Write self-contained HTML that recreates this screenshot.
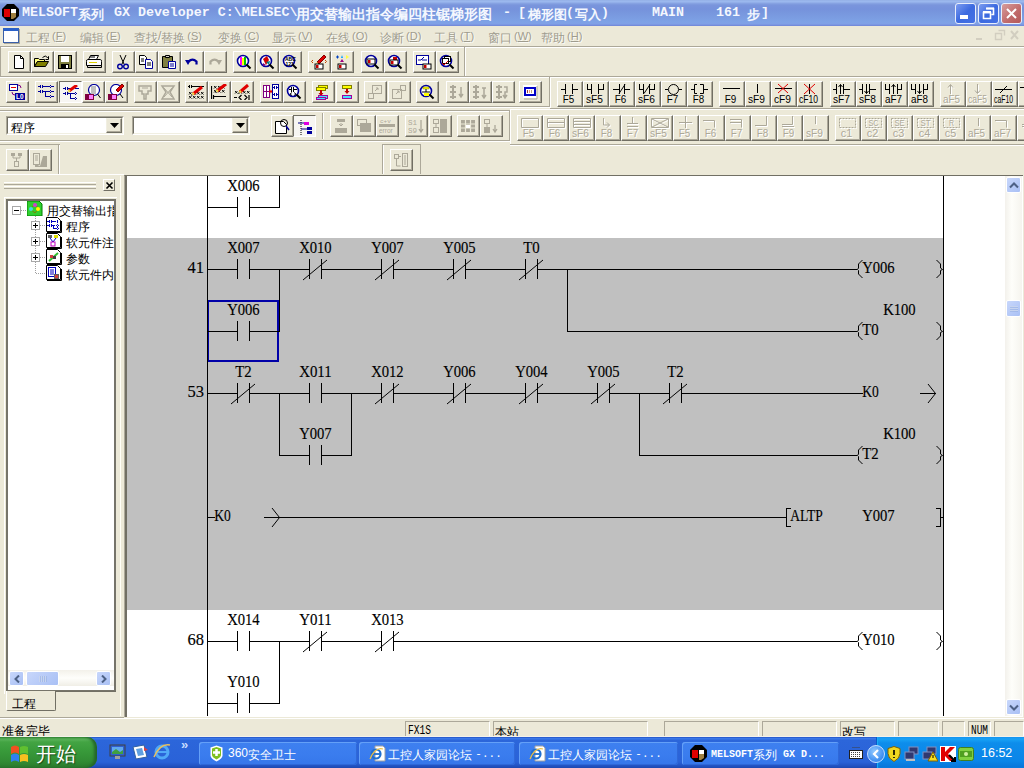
<!DOCTYPE html><html><head><meta charset="utf-8"><style>
@font-face{font-family:"Liberation Sans T";src:local("Liberation Sans");font-weight:400;size-adjust:133.33%}
@font-face{font-family:"Liberation Sans T";src:local("Liberation Sans Bold");font-weight:700;size-adjust:133.33%}
*{box-sizing:border-box}
body{margin:0;width:1024px;height:768px;position:relative;overflow:hidden;background:#ECE9D8;font-family:"Liberation Sans",sans-serif;font-size:12px;color:#000}
.a{position:absolute}
</style></head><body>
<div class="a" style="left:0;top:0;width:1024px;height:26px;background:linear-gradient(#92AEE4 0px,#9BB8EE 1px,#9BB8EE 2px,#8AA6E4 3px,#7A95DC 5px,#7692DC 9px,#7897DE 13px,#7B9DE2 18px,#7EA2E6 22px,#80A0E6 24px,#7890DE 25px,#6E86D6 26px)"></div>
<svg class="a" style="left:2px;top:4px" width="17" height="17" viewBox="0 0 17 17"><path d="M5 0h7l5 5v7l-5 5H5l-5-5V5z" fill="#000"/><path d="M2 5h6v8H2z" fill="#E00000"/><path d="M9 5h5v4H9z" fill="#fff"/><path d="M9 9h5v4l-3 2H9z" fill="#A08040"/></svg>
<span style="position:absolute;top:5px;color:#F4F7FE;font-weight:bold;white-space:pre;line-height:16px;font-family:'Liberation Mono',monospace;font-size:13.3px;left:22px">MELSOFT</span>
<span style="position:absolute;top:5px;color:#F4F7FE;font-weight:bold;white-space:pre;line-height:16px;font-family:'Liberation Sans',sans-serif;font-size:13px;left:78px"><span style="font-family:'Liberation Sans T';font-size:12.5px;line-height:0;font-style:normal;vertical-align:-2px;">系列</span></span>
<span style="position:absolute;top:5px;color:#F4F7FE;font-weight:bold;white-space:pre;line-height:16px;font-family:'Liberation Mono',monospace;font-size:13.3px;left:106px"> GX Developer C:\MELSEC\</span>
<span style="position:absolute;top:5px;color:#F4F7FE;font-weight:bold;white-space:pre;line-height:16px;font-family:'Liberation Sans',sans-serif;font-size:13px;left:296px"><span style="font-family:'Liberation Sans T';font-size:14.14px;line-height:0;font-style:normal;vertical-align:-2px;">用交替输出指令编四柱锯梯形图</span></span>
<span style="position:absolute;top:5px;color:#F4F7FE;font-weight:bold;white-space:pre;line-height:16px;font-family:'Liberation Mono',monospace;font-size:13.3px;left:503px">-</span>
<span style="position:absolute;top:5px;color:#F4F7FE;font-weight:bold;white-space:pre;line-height:16px;font-family:'Liberation Mono',monospace;font-size:13.3px;left:518px">[</span>
<span style="position:absolute;top:5px;color:#F4F7FE;font-weight:bold;white-space:pre;line-height:16px;font-family:'Liberation Sans',sans-serif;font-size:13px;left:528px"><span style="font-family:'Liberation Sans T';font-size:12.7px;line-height:0;font-style:normal;vertical-align:-2px;">梯形图</span></span>
<span style="position:absolute;top:5px;color:#F4F7FE;font-weight:bold;white-space:pre;line-height:16px;font-family:'Liberation Mono',monospace;font-size:13.3px;left:566px">(</span>
<span style="position:absolute;top:5px;color:#F4F7FE;font-weight:bold;white-space:pre;line-height:16px;font-family:'Liberation Sans',sans-serif;font-size:13px;left:575px"><span style="font-family:'Liberation Sans T';font-size:13px;line-height:0;font-style:normal;vertical-align:-2px;">写入</span></span>
<span style="position:absolute;top:5px;color:#F4F7FE;font-weight:bold;white-space:pre;line-height:16px;font-family:'Liberation Mono',monospace;font-size:13.3px;left:601px">)</span>
<span style="position:absolute;top:5px;color:#F4F7FE;font-weight:bold;white-space:pre;line-height:16px;font-family:'Liberation Mono',monospace;font-size:13.3px;left:652px">MAIN</span>
<span style="position:absolute;top:5px;color:#F4F7FE;font-weight:bold;white-space:pre;line-height:16px;font-family:'Liberation Mono',monospace;font-size:13.3px;left:716px">161</span>
<span style="position:absolute;top:5px;color:#F4F7FE;font-weight:bold;white-space:pre;line-height:16px;font-family:'Liberation Sans',sans-serif;font-size:13px;left:747px"><span style="font-family:'Liberation Sans T';font-size:13px;line-height:0;font-style:normal;vertical-align:-2px;">步</span></span>
<span style="position:absolute;top:5px;color:#F4F7FE;font-weight:bold;white-space:pre;line-height:16px;font-family:'Liberation Mono',monospace;font-size:13.3px;left:761px">]</span>
<div class="a" style="left:955px;top:3px;width:21px;height:21px;border:1px solid #E8EEFC;border-radius:3px;background:linear-gradient(135deg,#7C9CF0,#3C6AE0 50%,#4470E4)"><div class="a" style="left:4px;top:11px;width:8px;height:4px;background:#fff"></div></div>
<div class="a" style="left:978px;top:3px;width:21px;height:21px;border:1px solid #E8EEFC;border-radius:3px;background:linear-gradient(135deg,#7C9CF0,#3C6AE0 50%,#4470E4)"><svg class="a" style="left:3px;top:3px" width="13" height="13"><path d="M4.5 1.5h7v6h-2M1.5 5.5h7v6h-7z" fill="none" stroke="#fff" stroke-width="1.6"/><path d="M4 1.5h8M1 5.2h8" stroke="#fff" stroke-width="2.2"/></svg></div>
<div class="a" style="left:1001px;top:3px;width:21px;height:21px;border:1px solid #E8EEFC;border-radius:3px;background:linear-gradient(135deg,#D69C9C,#C06A6A 60%,#B45A5A)"><svg class="a" style="left:3px;top:3px" width="13" height="13"><path d="M2 2l9 9M11 2l-9 9" stroke="#fff" stroke-width="2"/></svg></div>
<div class="a" style="left:3px;top:28px;width:16px;height:15px;background:#fff;border:1px solid #3A5FA8;border-top:3px solid #2A60C8;box-shadow:1px 1px 0 #ACA899"></div>
<span class="a" style="left:26px;top:29px;font-size:12px;line-height:15px;color:#9F9C8E;white-space:pre;text-shadow:1px 1px 0 #FAFAF5"><span style="font-family:'Liberation Sans T';font-size:12px;line-height:0;font-style:normal;vertical-align:-2px;">工程</span><span style="font-size:11px;margin-left:2px">(<u>F</u>)</span></span>
<span class="a" style="left:80px;top:29px;font-size:12px;line-height:15px;color:#9F9C8E;white-space:pre;text-shadow:1px 1px 0 #FAFAF5"><span style="font-family:'Liberation Sans T';font-size:12px;line-height:0;font-style:normal;vertical-align:-2px;">编辑</span><span style="font-size:11px;margin-left:2px">(<u>E</u>)</span></span>
<span class="a" style="left:134px;top:29px;font-size:12px;line-height:15px;color:#9F9C8E;white-space:pre;text-shadow:1px 1px 0 #FAFAF5"><span style="font-family:'Liberation Sans T';font-size:12px;line-height:0;font-style:normal;vertical-align:-2px;">查找</span>/<span style="font-family:'Liberation Sans T';font-size:12px;line-height:0;font-style:normal;vertical-align:-2px;">替换</span><span style="font-size:11px;margin-left:2px">(<u>S</u>)</span></span>
<span class="a" style="left:218px;top:29px;font-size:12px;line-height:15px;color:#9F9C8E;white-space:pre;text-shadow:1px 1px 0 #FAFAF5"><span style="font-family:'Liberation Sans T';font-size:12px;line-height:0;font-style:normal;vertical-align:-2px;">变换</span><span style="font-size:11px;margin-left:2px">(<u>C</u>)</span></span>
<span class="a" style="left:272px;top:29px;font-size:12px;line-height:15px;color:#9F9C8E;white-space:pre;text-shadow:1px 1px 0 #FAFAF5"><span style="font-family:'Liberation Sans T';font-size:12px;line-height:0;font-style:normal;vertical-align:-2px;">显示</span><span style="font-size:11px;margin-left:2px">(<u>V</u>)</span></span>
<span class="a" style="left:326px;top:29px;font-size:12px;line-height:15px;color:#9F9C8E;white-space:pre;text-shadow:1px 1px 0 #FAFAF5"><span style="font-family:'Liberation Sans T';font-size:12px;line-height:0;font-style:normal;vertical-align:-2px;">在线</span><span style="font-size:11px;margin-left:2px">(<u>O</u>)</span></span>
<span class="a" style="left:380px;top:29px;font-size:12px;line-height:15px;color:#9F9C8E;white-space:pre;text-shadow:1px 1px 0 #FAFAF5"><span style="font-family:'Liberation Sans T';font-size:12px;line-height:0;font-style:normal;vertical-align:-2px;">诊断</span><span style="font-size:11px;margin-left:2px">(<u>D</u>)</span></span>
<span class="a" style="left:434px;top:29px;font-size:12px;line-height:15px;color:#9F9C8E;white-space:pre;text-shadow:1px 1px 0 #FAFAF5"><span style="font-family:'Liberation Sans T';font-size:12px;line-height:0;font-style:normal;vertical-align:-2px;">工具</span><span style="font-size:11px;margin-left:2px">(<u>T</u>)</span></span>
<span class="a" style="left:488px;top:29px;font-size:12px;line-height:15px;color:#9F9C8E;white-space:pre;text-shadow:1px 1px 0 #FAFAF5"><span style="font-family:'Liberation Sans T';font-size:12px;line-height:0;font-style:normal;vertical-align:-2px;">窗口</span><span style="font-size:11px;margin-left:2px">(<u>W</u>)</span></span>
<span class="a" style="left:541px;top:29px;font-size:12px;line-height:15px;color:#9F9C8E;white-space:pre;text-shadow:1px 1px 0 #FAFAF5"><span style="font-family:'Liberation Sans T';font-size:12px;line-height:0;font-style:normal;vertical-align:-2px;">帮助</span><span style="font-size:11px;margin-left:2px">(<u>H</u>)</span></span>
<svg class="a" style="left:970px;top:27px" width="52" height="18"><path d="M6 12h6" stroke="#D2CEC0" stroke-width="2"/><path d="M28.5 3.5h6v5M25.5 6.5h6v6h-6z" fill="none" stroke="#D2CEC0" stroke-width="1.4"/><path d="M41 4l7 8M48 4l-7 8" stroke="#D2CEC0" stroke-width="2"/></svg>
<div class="a" style="left:0px;top:46px;width:1024px;height:1px;background:#ACA899"></div>
<div class="a" style="left:0px;top:47px;width:1024px;height:1px;background:#fff"></div>
<div class="a" style="left:0px;top:47px;width:1px;height:29px;background:#ACA899"></div>
<div class="a" style="left:464px;top:47px;width:1px;height:29px;background:#ACA899"></div>
<div class="a" style="left:465px;top:47px;width:1px;height:29px;background:#fff"></div>
<div class="a" style="left:0px;top:76px;width:1024px;height:1px;background:#ACA899"></div>
<div class="a" style="left:0px;top:77px;width:1024px;height:1px;background:#fff"></div>
<div class="a" style="left:549px;top:77px;width:1px;height:30px;background:#ACA899"></div>
<div class="a" style="left:550px;top:77px;width:1px;height:32px;background:#fff"></div>
<div class="a" style="left:0px;top:106px;width:550px;height:1px;background:#ACA899"></div>
<div class="a" style="left:0px;top:107px;width:550px;height:1px;background:#fff"></div>
<div class="a" style="left:550px;top:108px;width:474px;height:1px;background:#ACA899"></div>
<div class="a" style="left:510px;top:109px;width:514px;height:1px;background:#fff"></div>
<div class="a" style="left:0px;top:110px;width:510px;height:1px;background:#ACA899"></div>
<div class="a" style="left:0px;top:111px;width:510px;height:1px;background:#fff"></div>
<div class="a" style="left:509px;top:110px;width:1px;height:31px;background:#ACA899"></div>
<div class="a" style="left:510px;top:109px;width:1px;height:36px;background:#fff"></div>
<div class="a" style="left:0px;top:140px;width:510px;height:1px;background:#ACA899"></div>
<div class="a" style="left:0px;top:141px;width:510px;height:1px;background:#fff"></div>
<div class="a" style="left:510px;top:144px;width:514px;height:1px;background:#ACA899"></div>
<div class="a" style="left:510px;top:145px;width:514px;height:1px;background:#fff"></div>
<div class="a" style="left:0px;top:144px;width:60px;height:1px;background:#ACA899"></div>
<div class="a" style="left:58px;top:145px;width:1px;height:29px;background:#ACA899"></div>
<div class="a" style="left:59px;top:145px;width:1px;height:29px;background:#fff"></div>
<div class="a" style="left:382px;top:144px;width:39px;height:1px;background:#ACA899"></div>
<div class="a" style="left:382px;top:145px;width:1px;height:29px;background:#ACA899"></div>
<div class="a" style="left:420px;top:145px;width:1px;height:29px;background:#ACA899"></div>
<div class="a" style="left:383px;top:145px;width:1px;height:29px;background:#fff"></div>
<div class="a" style="left:8px;top:51px;width:23px;height:22px;border-top:1px solid #fff;border-left:1px solid #fff;border-right:1px solid #716F64;border-bottom:1px solid #716F64;box-shadow:inset -1px -1px 0 #ACA899;background:#ECE9D8"><svg class="a" style="left:2px;top:2px" width="16" height="16" viewBox="0 0 16 16"><path d="M3.5 1.5h6l3 3v10h-9z" fill="#fff" stroke="#000"/><path d="M9.5 1.5v3h3" fill="none" stroke="#000"/></svg></div>
<div class="a" style="left:31px;top:51px;width:23px;height:22px;border-top:1px solid #fff;border-left:1px solid #fff;border-right:1px solid #716F64;border-bottom:1px solid #716F64;box-shadow:inset -1px -1px 0 #ACA899;background:#ECE9D8"><svg class="a" style="left:2px;top:2px" width="16" height="16" viewBox="0 0 16 16"><path d="M0.5 4.5h4l1 1h5v2h-7l-3 5z" fill="#FFFF80" stroke="#000"/><path d="M0.5 12.5l3-5h11l-3 5z" fill="#808000" stroke="#000"/><path d="M8.5 3.5q3-3 5 0l1-1v3h-3" fill="none" stroke="#000"/></svg></div>
<div class="a" style="left:54px;top:51px;width:23px;height:22px;border-top:1px solid #fff;border-left:1px solid #fff;border-right:1px solid #716F64;border-bottom:1px solid #716F64;box-shadow:inset -1px -1px 0 #ACA899;background:#ECE9D8"><svg class="a" style="left:2px;top:2px" width="16" height="16" viewBox="0 0 16 16"><rect x="1.5" y="1.5" width="13" height="13" fill="#808040" stroke="#000"/><rect x="4" y="2" width="8" height="6" fill="#fff"/><rect x="4" y="10" width="8" height="5" fill="#000"/><rect x="9" y="11" width="2" height="3" fill="#fff"/></svg></div>
<div class="a" style="left:83px;top:51px;width:23px;height:22px;border-top:1px solid #fff;border-left:1px solid #fff;border-right:1px solid #716F64;border-bottom:1px solid #716F64;box-shadow:inset -1px -1px 0 #ACA899;background:#ECE9D8"><svg class="a" style="left:2px;top:2px" width="16" height="16" viewBox="0 0 16 16"><path d="M4.5 1.5h8l-2 4h-8z" fill="#fff" stroke="#000"/><path d="M1.5 5.5h13q1 0 1 2v4h-15v-4q0-2 1-2z" fill="#fff" stroke="#000"/><path d="M1.5 11.5h14v2h-14z" fill="#D4D0C8" stroke="#000"/><path d="M3 8.5h8" stroke="#E0D000"/><path d="M4 3h5" stroke="#000"/></svg></div>
<div class="a" style="left:112px;top:51px;width:23px;height:22px;border-top:1px solid #fff;border-left:1px solid #fff;border-right:1px solid #716F64;border-bottom:1px solid #716F64;box-shadow:inset -1px -1px 0 #ACA899;background:#ECE9D8"><svg class="a" style="left:2px;top:2px" width="16" height="16" viewBox="0 0 16 16"><path d="M5 1l4 9M11 1l-4 9" stroke="#000"/><circle cx="5" cy="12.5" r="2.3" fill="none" stroke="#00009C" stroke-width="1.4"/><circle cx="11" cy="12.5" r="2.3" fill="none" stroke="#00009C" stroke-width="1.4"/></svg></div>
<div class="a" style="left:135px;top:51px;width:23px;height:22px;border-top:1px solid #fff;border-left:1px solid #fff;border-right:1px solid #716F64;border-bottom:1px solid #716F64;box-shadow:inset -1px -1px 0 #ACA899;background:#ECE9D8"><svg class="a" style="left:2px;top:2px" width="16" height="16" viewBox="0 0 16 16"><path d="M1.5 1.5h5l2 2v7h-7z" fill="#fff" stroke="#000"/><path d="M7.5 5.5h5l2 2v7h-7z" fill="#fff" stroke="#00009C"/><path d="M3 5h3M3 7h3M9 9h4M9 11h4" stroke="#000"/></svg></div>
<div class="a" style="left:158px;top:51px;width:23px;height:22px;border-top:1px solid #fff;border-left:1px solid #fff;border-right:1px solid #716F64;border-bottom:1px solid #716F64;box-shadow:inset -1px -1px 0 #ACA899;background:#ECE9D8"><svg class="a" style="left:2px;top:2px" width="16" height="16" viewBox="0 0 16 16"><path d="M1.5 2.5h10v11h-10z" fill="#808040" stroke="#000"/><path d="M4.5 1.5h4v2h-4z" fill="#D4D0C8" stroke="#000"/><path d="M7.5 7.5h7v7h-7z" fill="#fff" stroke="#00009C"/><path d="M9 10h4M9 12h4" stroke="#00009C"/></svg></div>
<div class="a" style="left:181px;top:51px;width:23px;height:22px;border-top:1px solid #fff;border-left:1px solid #fff;border-right:1px solid #716F64;border-bottom:1px solid #716F64;box-shadow:inset -1px -1px 0 #ACA899;background:#ECE9D8"><svg class="a" style="left:2px;top:2px" width="16" height="16" viewBox="0 0 16 16"><path d="M4.5 7.5q4-4 8 0v3" fill="none" stroke="#00009C" stroke-width="2.2"/><path d="M1 6l6 0-3 5z" fill="#00009C"/></svg></div>
<div class="a" style="left:204px;top:51px;width:23px;height:22px;border-top:1px solid #fff;border-left:1px solid #fff;border-right:1px solid #716F64;border-bottom:1px solid #716F64;box-shadow:inset -1px -1px 0 #ACA899;background:#ECE9D8"><svg class="a" style="left:2px;top:2px" width="16" height="16" viewBox="0 0 16 16"><path d="M11.5 7.5q-4-4-8 0v3" fill="none" stroke="#ACA899" stroke-width="2.2"/><path d="M15 6l-6 0 3 5z" fill="#ACA899"/></svg></div>
<div class="a" style="left:233px;top:51px;width:23px;height:22px;border-top:1px solid #fff;border-left:1px solid #fff;border-right:1px solid #716F64;border-bottom:1px solid #716F64;box-shadow:inset -1px -1px 0 #ACA899;background:#ECE9D8"><svg class="a" style="left:2px;top:2px" width="16" height="16" viewBox="0 0 16 16"><circle cx="7" cy="7" r="5.5" fill="#fff" stroke="#00009C" stroke-width="1.6"/><rect x="4" y="3" width="2" height="8" fill="#FF00FF"/><rect x="6" y="4" width="2" height="7" fill="#FFFF00"/><rect x="8" y="3" width="2" height="8" fill="#00C000"/><path d="M10.5 10.5l4 4" stroke="#000" stroke-width="2"/></svg></div>
<div class="a" style="left:256px;top:51px;width:23px;height:22px;border-top:1px solid #fff;border-left:1px solid #fff;border-right:1px solid #716F64;border-bottom:1px solid #716F64;box-shadow:inset -1px -1px 0 #ACA899;background:#ECE9D8"><svg class="a" style="left:2px;top:2px" width="16" height="16" viewBox="0 0 16 16"><circle cx="7" cy="7" r="5.5" fill="#fff" stroke="#00009C" stroke-width="1.6"/><path d="M4 5l4-3 2 4-3 5z" fill="#D00000"/><path d="M7 8l4-1-1 4z" fill="#008080"/><path d="M4 9l3 2-3 1z" fill="#800080"/><path d="M10.5 10.5l4 4" stroke="#000" stroke-width="2"/></svg></div>
<div class="a" style="left:279px;top:51px;width:23px;height:22px;border-top:1px solid #fff;border-left:1px solid #fff;border-right:1px solid #716F64;border-bottom:1px solid #716F64;box-shadow:inset -1px -1px 0 #ACA899;background:#ECE9D8"><svg class="a" style="left:2px;top:2px" width="16" height="16" viewBox="0 0 16 16"><circle cx="7" cy="7" r="5.5" fill="#fff" stroke="#00009C" stroke-width="1.6"/><text x="3" y="7" font-size="5" font-family="Liberation Sans" font-weight="bold">ABC</text><text x="3.5" y="11.5" font-size="5" font-family="Liberation Sans" font-weight="bold">123</text><path d="M10.5 10.5l4 4" stroke="#000" stroke-width="2"/></svg></div>
<div class="a" style="left:308px;top:51px;width:23px;height:22px;border-top:1px solid #fff;border-left:1px solid #fff;border-right:1px solid #716F64;border-bottom:1px solid #716F64;box-shadow:inset -1px -1px 0 #ACA899;background:#ECE9D8"><svg class="a" style="left:2px;top:2px" width="16" height="16" viewBox="0 0 16 16"><path d="M2 6l-1.5 1.5L2 9M14 6l1.5 1.5L14 9" stroke="#C04000" fill="none"/><path d="M6 8l7-7 2 2-7 7z" fill="#E00000" stroke="#800000"/><path d="M6 8l-1 2 2-1z" fill="#FFD040"/><rect x="4" y="10" width="8" height="5" fill="#fff" stroke="#000" stroke-width="1"/><rect x="5" y="11" width="2" height="3" fill="#C00000"/><rect x="7" y="11" width="1" height="3" fill="#F08080"/></svg></div>
<div class="a" style="left:331px;top:51px;width:23px;height:22px;border-top:1px solid #fff;border-left:1px solid #fff;border-right:1px solid #716F64;border-bottom:1px solid #716F64;box-shadow:inset -1px -1px 0 #ACA899;background:#ECE9D8"><svg class="a" style="left:2px;top:2px" width="16" height="16" viewBox="0 0 16 16"><path d="M2 3h3M3.5 1.5v3" stroke="#0040C0"/><path d="M8 1l1 3h-2z" fill="#00A0FF"/><path d="M12 1l3 2-3 2z" fill="#FFFF40"/><path d="M6 8l2-3 2 3z" fill="#A00080"/><rect x="4" y="10" width="8" height="5" fill="#fff" stroke="#000" stroke-width="1"/><rect x="5" y="11" width="2" height="3" fill="#C00000"/><rect x="7" y="11" width="1" height="3" fill="#F08080"/></svg></div>
<div class="a" style="left:361px;top:51px;width:23px;height:22px;border-top:1px solid #fff;border-left:1px solid #fff;border-right:1px solid #716F64;border-bottom:1px solid #716F64;box-shadow:inset -1px -1px 0 #ACA899;background:#ECE9D8"><svg class="a" style="left:2px;top:2px" width="16" height="16" viewBox="0 0 16 16"><circle cx="7" cy="7" r="5.5" fill="#fff" stroke="#00009C" stroke-width="1.6"/><rect x="3" y="5" width="8" height="5" fill="#fff" stroke="#000" stroke-width="1"/><rect x="4" y="6" width="2" height="3" fill="#C00000"/><rect x="6" y="6" width="1" height="3" fill="#F08080"/><path d="M10.5 10.5l4 4" stroke="#000" stroke-width="2"/></svg></div>
<div class="a" style="left:384px;top:51px;width:23px;height:22px;border-top:1px solid #fff;border-left:1px solid #fff;border-right:1px solid #716F64;border-bottom:1px solid #716F64;box-shadow:inset -1px -1px 0 #ACA899;background:#ECE9D8"><svg class="a" style="left:2px;top:2px" width="16" height="16" viewBox="0 0 16 16"><circle cx="7" cy="7" r="5.5" fill="#fff" stroke="#00009C" stroke-width="1.6"/><rect x="6" y="3" width="4" height="3" fill="#C00000"/><rect x="3" y="6" width="8" height="5" fill="#fff" stroke="#000" stroke-width="1"/><rect x="4" y="7" width="2" height="3" fill="#C00000"/><rect x="6" y="7" width="1" height="3" fill="#F08080"/><path d="M10.5 10.5l4 4" stroke="#000" stroke-width="2"/></svg></div>
<div class="a" style="left:413px;top:51px;width:23px;height:22px;border-top:1px solid #fff;border-left:1px solid #fff;border-right:1px solid #716F64;border-bottom:1px solid #716F64;box-shadow:inset -1px -1px 0 #ACA899;background:#ECE9D8"><svg class="a" style="left:2px;top:2px" width="16" height="16" viewBox="0 0 16 16"><rect x="0.5" y="1.5" width="12" height="9" fill="#fff" stroke="#00009C"/><path d="M2 6h3l3-3M6 6h5" stroke="#00009C" fill="none"/><rect x="7" y="10" width="8" height="5" fill="#fff" stroke="#000" stroke-width="1"/><rect x="8" y="11" width="2" height="3" fill="#C00000"/><rect x="10" y="11" width="1" height="3" fill="#F08080"/></svg></div>
<div class="a" style="left:436px;top:51px;width:23px;height:22px;border-top:1px solid #fff;border-left:1px solid #fff;border-right:1px solid #716F64;border-bottom:1px solid #716F64;box-shadow:inset -1px -1px 0 #ACA899;background:#ECE9D8"><svg class="a" style="left:2px;top:2px" width="16" height="16" viewBox="0 0 16 16"><circle cx="7" cy="7" r="5.5" fill="#fff" stroke="#00009C" stroke-width="1.6"/><rect x="5.5" y="2.5" width="6" height="5" fill="#fff" stroke="#000"/><rect x="3.5" y="4.5" width="6" height="5" fill="#fff" stroke="#000"/><path d="M3 9l2 2 4-4" stroke="#E00000" fill="none"/><path d="M10.5 10.5l4 4" stroke="#000" stroke-width="2"/></svg></div>
<div class="a" style="left:6px;top:81px;width:23px;height:22px;border-top:1px solid #fff;border-left:1px solid #fff;border-right:1px solid #716F64;border-bottom:1px solid #716F64;box-shadow:inset -1px -1px 0 #ACA899;background:#ECE9D8"><svg class="a" style="left:2px;top:2px" width="16" height="16" viewBox="0 0 16 16"><rect x="0.5" y="0.5" width="8" height="6" fill="#fff" stroke="#00009C"/><path d="M2 3.5h5" stroke="#E00000"/><path d="M9 1q3 0 3 3M3 8q0 3 3 3" stroke="#800080" fill="none"/><rect x="6" y="9" width="10" height="7" fill="#00009C"/><text x="7" y="15" font-size="6.5" fill="#fff" font-family="Liberation Sans" font-weight="bold">L0</text></svg></div>
<div class="a" style="left:35px;top:81px;width:23px;height:22px;border-top:1px solid #fff;border-left:1px solid #fff;border-right:1px solid #716F64;border-bottom:1px solid #716F64;box-shadow:inset -1px -1px 0 #ACA899;background:#ECE9D8"><svg class="a" style="left:2px;top:2px" width="16" height="16" viewBox="0 0 16 16"><path d="M0 2.5h2M2.5 1v3M4.5 1v3M5 2.5h6M14 2.5h2M0 7.5h2M2.5 6v3M4.5 6v3M5 7.5h6M14 7.5h2M7.5 8v5M8 12.5h3M14 12.5h2" stroke="#00009C" fill="none"/><path d="M11 2.5h3M11 7.5h3M11 12.5h3M12.5 1v3M12.5 6v3M12.5 11v3" stroke="#00009C" stroke-dasharray="1 1" fill="none"/></svg></div>
<div class="a" style="left:59px;top:81px;width:23px;height:22px;border-top:1px solid #716F64;border-left:1px solid #716F64;border-right:1px solid #fff;border-bottom:1px solid #fff;background:#F7F6F2"><svg class="a" style="left:3px;top:3px" width="16" height="16" viewBox="0 0 16 16"><path d="M0 3.5h2M2.5 2v3M4.5 2v3M5 3.5h3M12 3.5h4M0 8.5h2M2.5 7v3M4.5 7v3M5 8.5h6M7.5 9v5M8 13.5h3" stroke="#00009C" fill="none"/><path d="M11 8.5h4M11 13.5h4M12.5 7v3M12.5 12v3" stroke="#00009C" stroke-dasharray="1 1" fill="none"/><path d="M6 6L14 0" stroke="#E00000" stroke-width="3"/><path d="M5.5 6.5l1.5-1.5" stroke="#F0E040" stroke-width="2"/><path d="M4.5 7.5l0.5-0.5" stroke="#000" stroke-width="1.5"/></svg></div>
<div class="a" style="left:82px;top:81px;width:23px;height:22px;border-top:1px solid #fff;border-left:1px solid #fff;border-right:1px solid #716F64;border-bottom:1px solid #716F64;box-shadow:inset -1px -1px 0 #ACA899;background:#ECE9D8"><svg class="a" style="left:2px;top:2px" width="16" height="16" viewBox="0 0 16 16"><circle cx="9" cy="6" r="5.5" fill="#fff" stroke="#00009C" stroke-width="1.2"/><path d="M6 3h5M6 5h5M6 7h5M6 9h5" stroke="#808080"/><path d="M12.5 10l3 4" stroke="#000"/><rect x="0" y="10" width="9" height="6" fill="#800040"/><rect x="4" y="11" width="4" height="4" fill="#FF80FF"/></svg></div>
<div class="a" style="left:105px;top:81px;width:23px;height:22px;border-top:1px solid #fff;border-left:1px solid #fff;border-right:1px solid #716F64;border-bottom:1px solid #716F64;box-shadow:inset -1px -1px 0 #ACA899;background:#ECE9D8"><svg class="a" style="left:2px;top:2px" width="16" height="16" viewBox="0 0 16 16"><circle cx="8" cy="6" r="5.5" fill="#fff" stroke="#00009C" stroke-width="1.2"/><path d="M8 6l6-6 2 2-6 6z" fill="#E00000" stroke="#800000"/><path d="M12 10l3 4" stroke="#000"/><rect x="0" y="10" width="9" height="6" fill="#800040"/><rect x="4" y="11" width="4" height="4" fill="#FF80FF"/></svg></div>
<div class="a" style="left:134px;top:81px;width:23px;height:22px;border-top:1px solid #fff;border-left:1px solid #fff;border-right:1px solid #716F64;border-bottom:1px solid #716F64;box-shadow:inset -1px -1px 0 #ACA899;background:#ECE9D8"><svg class="a" style="left:2px;top:2px" width="16" height="16" viewBox="0 0 16 16"><path d="M2 2h12v5h-3v3h-2v5h-2v-5h-2v-3h-3z" fill="none" stroke="#ACA899" stroke-width="1.5"/><path d="M5 4h6" stroke="#ACA899"/></svg></div>
<div class="a" style="left:157px;top:81px;width:23px;height:22px;border-top:1px solid #fff;border-left:1px solid #fff;border-right:1px solid #716F64;border-bottom:1px solid #716F64;box-shadow:inset -1px -1px 0 #ACA899;background:#ECE9D8"><svg class="a" style="left:2px;top:2px" width="16" height="16" viewBox="0 0 16 16"><path d="M2 2h12l-4 6 4 7h-12l4-7z" fill="none" stroke="#ACA899" stroke-width="1.5"/><path d="M4 4l8 9M12 4l-8 9" stroke="#ACA899"/></svg></div>
<div class="a" style="left:185px;top:81px;width:23px;height:22px;border-top:1px solid #fff;border-left:1px solid #fff;border-right:1px solid #716F64;border-bottom:1px solid #716F64;box-shadow:inset -1px -1px 0 #ACA899;background:#ECE9D8"><svg class="a" style="left:2px;top:2px" width="16" height="16" viewBox="0 0 16 16"><path d="M0 2.5h2M1.5 1v3M3.5 1v3M4 2.5h12" stroke="#000" fill="none"/><path d="M1 8l2.5 2.5M3.5 8l-2.5 2.5M5 8l2.5 2.5M7.5 8l-2.5 2.5M9 8l2.5 2.5M11.5 8l-2.5 2.5M13 8l2.5 2.5M15.5 8l-2.5 2.5M1 12l2.5 2.5M3.5 12l-2.5 2.5M5 12l2.5 2.5M7.5 12l-2.5 2.5M9 12l2.5 2.5M11.5 12l-2.5 2.5M13 12l2.5 2.5M15.5 12l-2.5 2.5" stroke="#000" stroke-width="0.9" fill="none"/><path d="M5 10L14 3" stroke="#E00000" stroke-width="3"/><path d="M4.5 10.5l1.5-1.5" stroke="#F0E040" stroke-width="2"/><path d="M3.5 11.5l0.5-0.5" stroke="#000" stroke-width="1.5"/></svg></div>
<div class="a" style="left:208px;top:81px;width:23px;height:22px;border-top:1px solid #fff;border-left:1px solid #fff;border-right:1px solid #716F64;border-bottom:1px solid #716F64;box-shadow:inset -1px -1px 0 #ACA899;background:#ECE9D8"><svg class="a" style="left:2px;top:2px" width="16" height="16" viewBox="0 0 16 16"><path d="M0.5 2v13M2.5 11v4M3 12.5h12" stroke="#000" fill="none" stroke-width="1.2"/><path d="M3 2l2.5 2.5M5.5 2l-2.5 2.5M7 2l2.5 2.5M9.5 2l-2.5 2.5M11 2l2.5 2.5M13.5 2l-2.5 2.5M3 6l2.5 2.5M5.5 6l-2.5 2.5M7 6l2.5 2.5M9.5 6l-2.5 2.5M11 6l2.5 2.5M13.5 6l-2.5 2.5" stroke="#000" stroke-width="0.9" fill="none"/><path d="M6 7L15 0" stroke="#E00000" stroke-width="3"/><path d="M5.5 7.5l1.5-1.5" stroke="#F0E040" stroke-width="2"/><path d="M4.5 8.5l0.5-0.5" stroke="#000" stroke-width="1.5"/></svg></div>
<div class="a" style="left:231px;top:81px;width:23px;height:22px;border-top:1px solid #fff;border-left:1px solid #fff;border-right:1px solid #716F64;border-bottom:1px solid #716F64;box-shadow:inset -1px -1px 0 #ACA899;background:#ECE9D8"><svg class="a" style="left:2px;top:2px" width="16" height="16" viewBox="0 0 16 16"><path d="M1 7l2.5 2.5M3.5 7l-2.5 2.5M5 7l2.5 2.5M7.5 7l-2.5 2.5M9 7l2.5 2.5M11.5 7l-2.5 2.5M13 7l2.5 2.5M15.5 7l-2.5 2.5" stroke="#000" stroke-width="0.9" fill="none"/><path d="M0 13.5h3M7.5 11l-2.5 2.5 2.5 2.5M10.5 11l2.5 2.5-2.5 2.5M15 11v5" stroke="#000" fill="none" stroke-width="1.2"/><path d="M6 8L14 1" stroke="#E00000" stroke-width="3"/><path d="M5.5 8.5l1.5-1.5" stroke="#F0E040" stroke-width="2"/><path d="M4.5 9.5l0.5-0.5" stroke="#000" stroke-width="1.5"/></svg></div>
<div class="a" style="left:260px;top:81px;width:23px;height:22px;border-top:1px solid #fff;border-left:1px solid #fff;border-right:1px solid #716F64;border-bottom:1px solid #716F64;box-shadow:inset -1px -1px 0 #ACA899;background:#ECE9D8"><svg class="a" style="left:2px;top:2px" width="16" height="16" viewBox="0 0 16 16"><g shape-rendering="crispEdges"><rect x="0.5" y="1.5" width="6" height="12" fill="#fff" stroke="#800080"/><path d="M1 7.5h5M3.5 2v11" stroke="#800080"/><rect x="9.5" y="0.5" width="6" height="14" fill="#fff" stroke="#00009C"/><path d="M11.5 2v3M13.5 2v3M10 3.5h1M14 3.5h1M11.5 9v3M13.5 9v3M10 10.5h1M14 10.5h1" stroke="#00009C"/></g><path d="M6 7.5h3" stroke="#E00000" stroke-width="1.5"/><path d="M7.5 5.5l2 2-2 2z" fill="#E00000"/></svg></div>
<div class="a" style="left:283px;top:81px;width:23px;height:22px;border-top:1px solid #fff;border-left:1px solid #fff;border-right:1px solid #716F64;border-bottom:1px solid #716F64;box-shadow:inset -1px -1px 0 #ACA899;background:#ECE9D8"><svg class="a" style="left:2px;top:2px" width="16" height="16" viewBox="0 0 16 16"><circle cx="7" cy="7" r="5.5" fill="#fff" stroke="#00009C" stroke-width="1.6"/><g shape-rendering="crispEdges"><path d="M3 5.5h2M5.5 3v5M7.5 3v5M8 5.5h3" stroke="#000" fill="none"/></g><path d="M6 8.5l-2 1.5 2 1.5M8 8.5l2 1.5-2 1.5" stroke="#000" fill="none" stroke-width=".9"/><path d="M10.5 10.5l4 4" stroke="#000" stroke-width="2"/></svg></div>
<div class="a" style="left:312px;top:81px;width:23px;height:22px;border-top:1px solid #fff;border-left:1px solid #fff;border-right:1px solid #716F64;border-bottom:1px solid #716F64;box-shadow:inset -1px -1px 0 #ACA899;background:#ECE9D8"><svg class="a" style="left:2px;top:2px" width="16" height="16" viewBox="0 0 16 16"><rect x="3.5" y="1.5" width="9" height="3" fill="#FFFF00" stroke="#808000"/><rect x="1.5" y="3.5" width="9" height="3" fill="#FFFF00" stroke="#808000"/><path d="M6 6v5" stroke="#C00000" stroke-width="2"/><path d="M3.5 9h5l-2.5 3z" fill="#C00000"/><rect x="3.5" y="11.5" width="9" height="3" fill="#40E0FF" stroke="#A000A0"/><rect x="1.5" y="13.5" width="9" height="2" fill="#40E0FF" stroke="#A000A0"/></svg></div>
<div class="a" style="left:336px;top:81px;width:23px;height:22px;border-top:1px solid #fff;border-left:1px solid #fff;border-right:1px solid #716F64;border-bottom:1px solid #716F64;box-shadow:inset -1px -1px 0 #ACA899;background:#ECE9D8"><svg class="a" style="left:2px;top:2px" width="16" height="16" viewBox="0 0 16 16"><rect x="3.5" y="1.5" width="9" height="3" fill="#FFFF00" stroke="#808000"/><path d="M8 5v3" stroke="#C00000" stroke-width="2"/><path d="M5.5 7h5l-2.5 3z" fill="#C00000"/><rect x="3.5" y="11.5" width="9" height="3" fill="#40E0FF" stroke="#A000A0"/></svg></div>
<div class="a" style="left:364px;top:81px;width:23px;height:22px;border-top:1px solid #fff;border-left:1px solid #fff;border-right:1px solid #716F64;border-bottom:1px solid #716F64;box-shadow:inset -1px -1px 0 #ACA899;background:#ECE9D8"><svg class="a" style="left:2px;top:2px" width="16" height="16" viewBox="0 0 16 16"><rect x="5.5" y="1.5" width="9" height="8" fill="none" stroke="#ACA899"/><rect x="1.5" y="9.5" width="5" height="5" fill="none" stroke="#ACA899"/><path d="M8 7l3-3M9 4h2v2" stroke="#ACA899" fill="none"/></svg></div>
<div class="a" style="left:388px;top:81px;width:23px;height:22px;border-top:1px solid #fff;border-left:1px solid #fff;border-right:1px solid #716F64;border-bottom:1px solid #716F64;box-shadow:inset -1px -1px 0 #ACA899;background:#ECE9D8"><svg class="a" style="left:2px;top:2px" width="16" height="16" viewBox="0 0 16 16"><rect x="1.5" y="5.5" width="9" height="9" fill="none" stroke="#ACA899"/><rect x="9.5" y="1.5" width="5" height="5" fill="none" stroke="#ACA899"/><path d="M5 10l3-3M6 7h2v2" stroke="#ACA899" fill="none"/></svg></div>
<div class="a" style="left:416px;top:81px;width:23px;height:22px;border-top:1px solid #fff;border-left:1px solid #fff;border-right:1px solid #716F64;border-bottom:1px solid #716F64;box-shadow:inset -1px -1px 0 #ACA899;background:#ECE9D8"><svg class="a" style="left:2px;top:2px" width="16" height="16" viewBox="0 0 16 16"><circle cx="7" cy="7" r="5.5" fill="#fff" stroke="#00009C" stroke-width="1.6"/><rect x="4" y="3" width="6" height="2" fill="#FFFF00" stroke="#808000" stroke-width=".5"/><path d="M7 5v3M3 8h8" stroke="#000"/><rect x="5" y="9" width="5" height="3" fill="#FFFF00"/><path d="M10.5 10.5l4 4" stroke="#000" stroke-width="2"/></svg></div>
<div class="a" style="left:446px;top:81px;width:23px;height:22px;border-top:1px solid #fff;border-left:1px solid #fff;border-right:1px solid #716F64;border-bottom:1px solid #716F64;box-shadow:inset -1px -1px 0 #ACA899;background:#ECE9D8"><svg class="a" style="left:2px;top:2px" width="16" height="16" viewBox="0 0 16 16"><path d="M4 1v14M1 3h6M1 8h6M1 13h6" stroke="#ACA899" stroke-width="2"/><path d="M12 3v9M10 10l2 3 2-3" stroke="#ACA899" fill="none" stroke-width="1.5"/></svg></div>
<div class="a" style="left:469px;top:81px;width:23px;height:22px;border-top:1px solid #fff;border-left:1px solid #fff;border-right:1px solid #716F64;border-bottom:1px solid #716F64;box-shadow:inset -1px -1px 0 #ACA899;background:#ECE9D8"><svg class="a" style="left:2px;top:2px" width="16" height="16" viewBox="0 0 16 16"><path d="M4 1v14M1 3h6M1 8h6M1 13h6" stroke="#ACA899" stroke-width="2"/><path d="M12 4v9M10 4h4M10 11l2 3 2-3" stroke="#ACA899" fill="none" stroke-width="1.5"/></svg></div>
<div class="a" style="left:492px;top:81px;width:23px;height:22px;border-top:1px solid #fff;border-left:1px solid #fff;border-right:1px solid #716F64;border-bottom:1px solid #716F64;box-shadow:inset -1px -1px 0 #ACA899;background:#ECE9D8"><svg class="a" style="left:2px;top:2px" width="16" height="16" viewBox="0 0 16 16"><path d="M4 1v14M1 3h6M1 8h6M1 13h6" stroke="#ACA899" stroke-width="2"/><path d="M9 3h3v5h-2v5M8 11l2 3 2-3" stroke="#ACA899" fill="none" stroke-width="1.5"/></svg></div>
<div class="a" style="left:519px;top:81px;width:23px;height:22px;border-top:1px solid #fff;border-left:1px solid #fff;border-right:1px solid #716F64;border-bottom:1px solid #716F64;box-shadow:inset -1px -1px 0 #ACA899;background:#ECE9D8"><svg class="a" style="left:2px;top:2px" width="16" height="16" viewBox="0 0 16 16"><rect x="1" y="1" width="14" height="13" fill="#fff"/><path d="M15 2v13H2" stroke="#ACA899" fill="none"/><rect x="2" y="3" width="12" height="9" fill="#0000C8"/><rect x="4" y="5" width="8" height="5" fill="#fff"/><path d="M5.5 6v3" stroke="#A04040"/><path d="M7.5 6v3" stroke="#F0A080"/><path d="M9.5 6v3" stroke="#C0A080"/></svg></div>
<div class="a" style="left:557px;top:81px;width:26px;height:26px;border-top:1px solid #fff;border-left:1px solid #fff;border-right:1px solid #716F64;border-bottom:1px solid #716F64;box-shadow:inset -1px -1px 0 #ACA899;background:#ECE9D8"><svg class="a" style="left:0;top:0" width="24" height="23" viewBox="0 0 24 23"><g transform="translate(0,0)"><path d="M3 7.5h5M7.5 2v10M14.5 2v10M15 7.5h5" fill="none" stroke="#000"/><text x="10.5" y="21" text-anchor="middle" font-size="11" font-family="Liberation Sans" fill="#000" textLength="11.5" lengthAdjust="spacingAndGlyphs">F5</text></g></svg></div>
<div class="a" style="left:583px;top:81px;width:26px;height:26px;border-top:1px solid #fff;border-left:1px solid #fff;border-right:1px solid #716F64;border-bottom:1px solid #716F64;box-shadow:inset -1px -1px 0 #ACA899;background:#ECE9D8"><svg class="a" style="left:0;top:0" width="24" height="23" viewBox="0 0 24 23"><g transform="translate(0,0)"><path d="M3.5 2v6M3 7.5h5M7.5 2v10M14.5 2v10M15 7.5h5M19.5 2v6" fill="none" stroke="#000"/><text x="10.5" y="21" text-anchor="middle" font-size="11" font-family="Liberation Sans" fill="#000" textLength="17" lengthAdjust="spacingAndGlyphs">sF5</text></g></svg></div>
<div class="a" style="left:609px;top:81px;width:26px;height:26px;border-top:1px solid #fff;border-left:1px solid #fff;border-right:1px solid #716F64;border-bottom:1px solid #716F64;box-shadow:inset -1px -1px 0 #ACA899;background:#ECE9D8"><svg class="a" style="left:0;top:0" width="24" height="23" viewBox="0 0 24 23"><g transform="translate(0,0)"><path d="M3 7.5h6M9.5 2v10M14.5 2v10M15 7.5h5M9 11.5L15 2.5" fill="none" stroke="#000"/><text x="10.5" y="21" text-anchor="middle" font-size="11" font-family="Liberation Sans" fill="#000" textLength="11.5" lengthAdjust="spacingAndGlyphs">F6</text></g></svg></div>
<div class="a" style="left:635px;top:81px;width:26px;height:26px;border-top:1px solid #fff;border-left:1px solid #fff;border-right:1px solid #716F64;border-bottom:1px solid #716F64;box-shadow:inset -1px -1px 0 #ACA899;background:#ECE9D8"><svg class="a" style="left:0;top:0" width="24" height="23" viewBox="0 0 24 23"><g transform="translate(0,0)"><path d="M3.5 2v6M3 7.5h5M7.5 2v10M13.5 2v10M14 7.5h5M18.5 2v6M8 11.5L14 2.5" fill="none" stroke="#000"/><text x="10.5" y="21" text-anchor="middle" font-size="11" font-family="Liberation Sans" fill="#000" textLength="17" lengthAdjust="spacingAndGlyphs">sF6</text></g></svg></div>
<div class="a" style="left:661px;top:81px;width:26px;height:26px;border-top:1px solid #fff;border-left:1px solid #fff;border-right:1px solid #716F64;border-bottom:1px solid #716F64;box-shadow:inset -1px -1px 0 #ACA899;background:#ECE9D8"><svg class="a" style="left:0;top:0" width="24" height="23" viewBox="0 0 24 23"><g transform="translate(0,0)"><path d="M3 7.5h3M17 7.5h3M6.5 7.5a5 5 0 1 0 10 0a5 5 0 1 0-10 0" fill="none" stroke="#000"/><text x="10.5" y="21" text-anchor="middle" font-size="11" font-family="Liberation Sans" fill="#000" textLength="11.5" lengthAdjust="spacingAndGlyphs">F7</text></g></svg></div>
<div class="a" style="left:687px;top:81px;width:26px;height:26px;border-top:1px solid #fff;border-left:1px solid #fff;border-right:1px solid #716F64;border-bottom:1px solid #716F64;box-shadow:inset -1px -1px 0 #ACA899;background:#ECE9D8"><svg class="a" style="left:0;top:0" width="24" height="23" viewBox="0 0 24 23"><g transform="translate(0,0)"><path d="M3 7.5h3M9 2.5H6.5v9H9M12 2.5h3.5v9H12M16 7.5h4" fill="none" stroke="#000"/><text x="10.5" y="21" text-anchor="middle" font-size="11" font-family="Liberation Sans" fill="#000" textLength="11.5" lengthAdjust="spacingAndGlyphs">F8</text></g></svg></div>
<div class="a" style="left:719px;top:81px;width:26px;height:26px;border-top:1px solid #fff;border-left:1px solid #fff;border-right:1px solid #716F64;border-bottom:1px solid #716F64;box-shadow:inset -1px -1px 0 #ACA899;background:#ECE9D8"><svg class="a" style="left:0;top:0" width="24" height="23" viewBox="0 0 24 23"><g transform="translate(0,0)"><path d="M3 6.5h17" fill="none" stroke="#000"/><text x="10.5" y="21" text-anchor="middle" font-size="11" font-family="Liberation Sans" fill="#000" textLength="11.5" lengthAdjust="spacingAndGlyphs">F9</text></g></svg></div>
<div class="a" style="left:745px;top:81px;width:26px;height:26px;border-top:1px solid #fff;border-left:1px solid #fff;border-right:1px solid #716F64;border-bottom:1px solid #716F64;box-shadow:inset -1px -1px 0 #ACA899;background:#ECE9D8"><svg class="a" style="left:0;top:0" width="24" height="23" viewBox="0 0 24 23"><g transform="translate(0,0)"><path d="M11.5 2v9" fill="none" stroke="#000"/><text x="10.5" y="21" text-anchor="middle" font-size="11" font-family="Liberation Sans" fill="#000" textLength="17" lengthAdjust="spacingAndGlyphs">sF9</text></g></svg></div>
<div class="a" style="left:771px;top:81px;width:26px;height:26px;border-top:1px solid #fff;border-left:1px solid #fff;border-right:1px solid #716F64;border-bottom:1px solid #716F64;box-shadow:inset -1px -1px 0 #ACA899;background:#ECE9D8"><svg class="a" style="left:0;top:0" width="24" height="23" viewBox="0 0 24 23"><g transform="translate(0,0)"><path d="M3 6.5h17" fill="none" stroke="#000"/><text x="10.5" y="21" text-anchor="middle" font-size="11" font-family="Liberation Sans" fill="#000" textLength="17" lengthAdjust="spacingAndGlyphs">cF9</text></g><path d="M6 2l10 9M16 2L6 11" fill="none" stroke="#E00000"/></svg></div>
<div class="a" style="left:797px;top:81px;width:26px;height:26px;border-top:1px solid #fff;border-left:1px solid #fff;border-right:1px solid #716F64;border-bottom:1px solid #716F64;box-shadow:inset -1px -1px 0 #ACA899;background:#ECE9D8"><svg class="a" style="left:0;top:0" width="24" height="23" viewBox="0 0 24 23"><g transform="translate(0,0)"><path d="M11.5 2v10" fill="none" stroke="#000"/><text x="10.5" y="21" text-anchor="middle" font-size="11" font-family="Liberation Sans" fill="#000" textLength="19" lengthAdjust="spacingAndGlyphs">cF10</text></g><path d="M6 2l11 10M17 2L6 12" fill="none" stroke="#E00000"/></svg></div>
<div class="a" style="left:830px;top:81px;width:26px;height:26px;border-top:1px solid #fff;border-left:1px solid #fff;border-right:1px solid #716F64;border-bottom:1px solid #716F64;box-shadow:inset -1px -1px 0 #ACA899;background:#ECE9D8"><svg class="a" style="left:0;top:0" width="24" height="23" viewBox="0 0 24 23"><g transform="translate(0,0)"><path d="M2 7.5h3M5.5 2v10M12.5 2v10M13 7.5h6M9.5 12V2.5M7.5 5l2-2.5 2 2.5" fill="none" stroke="#000"/><text x="10.5" y="21" text-anchor="middle" font-size="11" font-family="Liberation Sans" fill="#000" textLength="17" lengthAdjust="spacingAndGlyphs">sF7</text></g></svg></div>
<div class="a" style="left:856px;top:81px;width:26px;height:26px;border-top:1px solid #fff;border-left:1px solid #fff;border-right:1px solid #716F64;border-bottom:1px solid #716F64;box-shadow:inset -1px -1px 0 #ACA899;background:#ECE9D8"><svg class="a" style="left:0;top:0" width="24" height="23" viewBox="0 0 24 23"><g transform="translate(0,0)"><path d="M2 7.5h3M5.5 2v10M12.5 2v10M13 7.5h6M9.5 2v9.5M7.5 9l2 2.5 2-2.5" fill="none" stroke="#000"/><text x="10.5" y="21" text-anchor="middle" font-size="11" font-family="Liberation Sans" fill="#000" textLength="17" lengthAdjust="spacingAndGlyphs">sF8</text></g></svg></div>
<div class="a" style="left:882px;top:81px;width:26px;height:26px;border-top:1px solid #fff;border-left:1px solid #fff;border-right:1px solid #716F64;border-bottom:1px solid #716F64;box-shadow:inset -1px -1px 0 #ACA899;background:#ECE9D8"><svg class="a" style="left:0;top:0" width="24" height="23" viewBox="0 0 24 23"><g transform="translate(0,0)"><path d="M2.5 2v6M2 7.5h4M6.5 2v10M14.5 2v10M15 7.5h4M18.5 2v6M10.5 12V2.5M8.5 5l2-2.5 2 2.5" fill="none" stroke="#000"/><text x="10.5" y="21" text-anchor="middle" font-size="11" font-family="Liberation Sans" fill="#000" textLength="17" lengthAdjust="spacingAndGlyphs">aF7</text></g></svg></div>
<div class="a" style="left:908px;top:81px;width:26px;height:26px;border-top:1px solid #fff;border-left:1px solid #fff;border-right:1px solid #716F64;border-bottom:1px solid #716F64;box-shadow:inset -1px -1px 0 #ACA899;background:#ECE9D8"><svg class="a" style="left:0;top:0" width="24" height="23" viewBox="0 0 24 23"><g transform="translate(0,0)"><path d="M2.5 2v6M2 7.5h4M6.5 2v10M14.5 2v10M15 7.5h4M18.5 2v6M10.5 2v9.5M8.5 9l2 2.5 2-2.5" fill="none" stroke="#000"/><text x="10.5" y="21" text-anchor="middle" font-size="11" font-family="Liberation Sans" fill="#000" textLength="17" lengthAdjust="spacingAndGlyphs">aF8</text></g></svg></div>
<div class="a" style="left:940px;top:81px;width:26px;height:26px;border-top:1px solid #fff;border-left:1px solid #fff;border-right:1px solid #716F64;border-bottom:1px solid #716F64;box-shadow:inset -1px -1px 0 #ACA899;background:#ECE9D8"><svg class="a" style="left:0;top:0" width="24" height="23" viewBox="0 0 24 23"><g transform="translate(1,1)"><path d="M9.5 12V3M7 5.5l2.5-3 2.5 3" fill="none" stroke="#fff"/><text x="10.5" y="21" text-anchor="middle" font-size="11" font-family="Liberation Sans" fill="#fff" textLength="17" lengthAdjust="spacingAndGlyphs">aF5</text></g><g transform="translate(0,0)"><path d="M9.5 12V3M7 5.5l2.5-3 2.5 3" fill="none" stroke="#ACA899"/><text x="10.5" y="21" text-anchor="middle" font-size="11" font-family="Liberation Sans" fill="#ACA899" textLength="17" lengthAdjust="spacingAndGlyphs">aF5</text></g></svg></div>
<div class="a" style="left:966px;top:81px;width:26px;height:26px;border-top:1px solid #fff;border-left:1px solid #fff;border-right:1px solid #716F64;border-bottom:1px solid #716F64;box-shadow:inset -1px -1px 0 #ACA899;background:#ECE9D8"><svg class="a" style="left:0;top:0" width="24" height="23" viewBox="0 0 24 23"><g transform="translate(1,1)"><path d="M10.5 2v9M8 8.5l2.5 3 2.5-3" fill="none" stroke="#fff"/><text x="10.5" y="21" text-anchor="middle" font-size="11" font-family="Liberation Sans" fill="#fff" textLength="19" lengthAdjust="spacingAndGlyphs">caF5</text></g><g transform="translate(0,0)"><path d="M10.5 2v9M8 8.5l2.5 3 2.5-3" fill="none" stroke="#ACA899"/><text x="10.5" y="21" text-anchor="middle" font-size="11" font-family="Liberation Sans" fill="#ACA899" textLength="19" lengthAdjust="spacingAndGlyphs">caF5</text></g></svg></div>
<div class="a" style="left:992px;top:81px;width:26px;height:26px;border-top:1px solid #fff;border-left:1px solid #fff;border-right:1px solid #716F64;border-bottom:1px solid #716F64;box-shadow:inset -1px -1px 0 #ACA899;background:#ECE9D8"><svg class="a" style="left:0;top:0" width="24" height="23" viewBox="0 0 24 23"><g transform="translate(0,0)"><path d="M2 7.5h17M7 11L14 4" fill="none" stroke="#000"/><text x="10.5" y="21" text-anchor="middle" font-size="11" font-family="Liberation Sans" fill="#000" textLength="19" lengthAdjust="spacingAndGlyphs">caF10</text></g></svg></div>
<div class="a" style="left:1018px;top:81px;width:26px;height:26px;border-top:1px solid #fff;border-left:1px solid #fff;border-right:1px solid #716F64;border-bottom:1px solid #716F64;box-shadow:inset -1px -1px 0 #ACA899;background:#ECE9D8"><svg class="a" style="left:0;top:0" width="24" height="23" viewBox="0 0 24 23"><g transform="translate(0,0)"><path d="M1 5.5h6" fill="none" stroke="#000"/><text x="10.5" y="21" text-anchor="middle" font-size="11" font-family="Liberation Sans" fill="#000" textLength="6" lengthAdjust="spacingAndGlyphs">F</text></g></svg></div>
<div class="a" style="left:6px;top:116px;width:118px;height:19px;border-top:1px solid #ACA899;border-left:1px solid #ACA899;border-right:1px solid #fff;border-bottom:1px solid #fff"><div class="a" style="left:0;top:0;width:116px;height:17px;border-top:1px solid #716F64;border-left:1px solid #716F64;border-right:1px solid #F1EFE2;border-bottom:1px solid #F1EFE2;background:#fff"><span class="a" style="left:3px;top:1px;font-size:12px;line-height:15px"><span style="font-family:'Liberation Sans T';font-size:12px;line-height:0;font-style:normal;vertical-align:-2px;">程序</span></span><div class="a" style="left:98px;top:0;width:16px;height:15px;border-top:1px solid #F1EFE2;border-left:1px solid #F1EFE2;border-right:1px solid #716F64;border-bottom:1px solid #716F64;box-shadow:inset -1px -1px 0 #ACA899;background:#ECE9D8"><svg class="a" style="left:3px;top:4px" width="9" height="5"><path d="M0 0h9L4.5 5z" fill="#000"/></svg></div></div></div>
<div class="a" style="left:132px;top:116px;width:118px;height:19px;border-top:1px solid #ACA899;border-left:1px solid #ACA899;border-right:1px solid #fff;border-bottom:1px solid #fff"><div class="a" style="left:0;top:0;width:116px;height:17px;border-top:1px solid #716F64;border-left:1px solid #716F64;border-right:1px solid #F1EFE2;border-bottom:1px solid #F1EFE2;background:#fff"><span class="a" style="left:3px;top:1px;font-size:12px;line-height:15px"></span><div class="a" style="left:98px;top:0;width:16px;height:15px;border-top:1px solid #F1EFE2;border-left:1px solid #F1EFE2;border-right:1px solid #716F64;border-bottom:1px solid #716F64;box-shadow:inset -1px -1px 0 #ACA899;background:#ECE9D8"><svg class="a" style="left:3px;top:4px" width="9" height="5"><path d="M0 0h9L4.5 5z" fill="#000"/></svg></div></div></div>
<div class="a" style="left:271px;top:115px;width:23px;height:22px;border-top:1px solid #fff;border-left:1px solid #fff;border-right:1px solid #716F64;border-bottom:1px solid #716F64;box-shadow:inset -1px -1px 0 #ACA899;background:#ECE9D8"><svg class="a" style="left:2px;top:2px" width="16" height="16" viewBox="0 0 16 16"><path d="M1.5 3.5h8l3 3v9h-11z" fill="#fff" stroke="#000"/><circle cx="10" cy="5" r="3.5" fill="none" stroke="#000"/><path d="M12 8l3 4" stroke="#00009C" stroke-width="1.5"/></svg></div>
<div class="a" style="left:293px;top:115px;width:23px;height:22px;border-top:1px solid #716F64;border-left:1px solid #716F64;border-right:1px solid #fff;border-bottom:1px solid #fff;background:#F7F6F2"><svg class="a" style="left:3px;top:3px" width="16" height="16" viewBox="0 0 16 16"><path d="M4 1v15" stroke="#000" stroke-dasharray="1 1"/><path d="M1 4h6M4 10h6" stroke="#000080"/><rect x="7" y="3" width="5" height="3" fill="#E000E0"/><rect x="10" y="8" width="5" height="3" fill="#00009C"/><rect x="10" y="12" width="5" height="3" fill="#00009C"/></svg></div>
<div class="a" style="left:330px;top:115px;width:23px;height:22px;border-top:1px solid #fff;border-left:1px solid #fff;border-right:1px solid #716F64;border-bottom:1px solid #716F64;box-shadow:inset -1px -1px 0 #ACA899;background:#ECE9D8"><svg class="a" style="left:2px;top:2px" width="16" height="16" viewBox="0 0 16 16"><rect x="4" y="1" width="8" height="3" fill="#ACA899"/><path d="M8 5v3M6 6l2 2 2-2" stroke="#ACA899" fill="none"/><rect x="2" y="10" width="12" height="5" fill="#ACA899"/></svg></div>
<div class="a" style="left:353px;top:115px;width:23px;height:22px;border-top:1px solid #fff;border-left:1px solid #fff;border-right:1px solid #716F64;border-bottom:1px solid #716F64;box-shadow:inset -1px -1px 0 #ACA899;background:#ECE9D8"><svg class="a" style="left:2px;top:2px" width="16" height="16" viewBox="0 0 16 16"><rect x="1.5" y="1.5" width="9" height="6" fill="none" stroke="#ACA899"/><rect x="4" y="5" width="11" height="9" fill="#ACA899"/></svg></div>
<div class="a" style="left:376px;top:115px;width:23px;height:22px;border-top:1px solid #fff;border-left:1px solid #fff;border-right:1px solid #716F64;border-bottom:1px solid #716F64;box-shadow:inset -1px -1px 0 #ACA899;background:#ECE9D8"><svg class="a" style="left:2px;top:2px" width="16" height="16" viewBox="0 0 16 16"><text x="1" y="5" font-size="6" fill="#ACA899" font-family="Liberation Mono">c+v</text><rect x="0" y="6" width="16" height="3" fill="#ACA899"/><text x="0" y="15" font-size="6.5" fill="#ACA899" font-family="Liberation Sans">error</text></svg></div>
<div class="a" style="left:405px;top:115px;width:23px;height:22px;border-top:1px solid #fff;border-left:1px solid #fff;border-right:1px solid #716F64;border-bottom:1px solid #716F64;box-shadow:inset -1px -1px 0 #ACA899;background:#ECE9D8"><svg class="a" style="left:2px;top:2px" width="16" height="16" viewBox="0 0 16 16"><text x="0" y="7" font-size="7.5" fill="#ACA899" font-family="Liberation Mono">S1</text><text x="0" y="15" font-size="7.5" fill="#ACA899" font-family="Liberation Mono">S9</text><path d="M13 2v12M11 11l2 3 2-3" stroke="#ACA899" fill="none" stroke-width="1.3"/></svg></div>
<div class="a" style="left:429px;top:115px;width:23px;height:22px;border-top:1px solid #fff;border-left:1px solid #fff;border-right:1px solid #716F64;border-bottom:1px solid #716F64;box-shadow:inset -1px -1px 0 #ACA899;background:#ECE9D8"><svg class="a" style="left:2px;top:2px" width="16" height="16" viewBox="0 0 16 16"><rect x="1.5" y="1.5" width="5" height="4" fill="none" stroke="#ACA899"/><rect x="1.5" y="9.5" width="5" height="5" fill="none" stroke="#ACA899"/><path d="M4 6v3" stroke="#ACA899"/><rect x="8" y="1" width="7" height="14" fill="#ACA899"/></svg></div>
<div class="a" style="left:457px;top:115px;width:23px;height:22px;border-top:1px solid #fff;border-left:1px solid #fff;border-right:1px solid #716F64;border-bottom:1px solid #716F64;box-shadow:inset -1px -1px 0 #ACA899;background:#ECE9D8"><svg class="a" style="left:2px;top:2px" width="16" height="16" viewBox="0 0 16 16"><rect x="1" y="2" width="14" height="12" fill="#ACA899"/><path d="M1 6h14M1 10h14M5.5 2v12M10.5 2v12" stroke="#ECE9D8" stroke-width="1.2"/><rect x="6" y="7" width="4" height="3" fill="#fff"/></svg></div>
<div class="a" style="left:480px;top:115px;width:23px;height:22px;border-top:1px solid #fff;border-left:1px solid #fff;border-right:1px solid #716F64;border-bottom:1px solid #716F64;box-shadow:inset -1px -1px 0 #ACA899;background:#ECE9D8"><svg class="a" style="left:2px;top:2px" width="16" height="16" viewBox="0 0 16 16"><rect x="1.5" y="1.5" width="5" height="4" fill="none" stroke="#ACA899"/><path d="M4 6v3" stroke="#ACA899"/><rect x="1" y="9" width="6" height="6" fill="#ACA899"/><path d="M12 7v7M10 11l2 3 2-3" stroke="#ACA899" fill="none" stroke-width="1.3"/></svg></div>
<div class="a" style="left:322px;top:113px;width:2px;height:26px;border-left:1px solid #ACA899;border-right:1px solid #fff"></div>
<div class="a" style="left:517px;top:115px;width:26px;height:26px;border-top:1px solid #fff;border-left:1px solid #fff;border-right:1px solid #716F64;border-bottom:1px solid #716F64;box-shadow:inset -1px -1px 0 #ACA899;background:#ECE9D8"><svg class="a" style="left:0;top:0" width="24" height="23" viewBox="0 0 24 23"><g transform="translate(1,1)"><path d="M3.5 2.5h17v9h-17z" fill="none" stroke="#fff"/><text x="10.5" y="21" text-anchor="middle" font-size="11" font-family="Liberation Sans" fill="#fff" textLength="11.5" lengthAdjust="spacingAndGlyphs">F5</text></g><g transform="translate(0,0)"><path d="M3.5 2.5h17v9h-17z" fill="none" stroke="#ACA899"/><text x="10.5" y="21" text-anchor="middle" font-size="11" font-family="Liberation Sans" fill="#ACA899" textLength="11.5" lengthAdjust="spacingAndGlyphs">F5</text></g></svg></div>
<div class="a" style="left:543px;top:115px;width:26px;height:26px;border-top:1px solid #fff;border-left:1px solid #fff;border-right:1px solid #716F64;border-bottom:1px solid #716F64;box-shadow:inset -1px -1px 0 #ACA899;background:#ECE9D8"><svg class="a" style="left:0;top:0" width="24" height="23" viewBox="0 0 24 23"><g transform="translate(1,1)"><path d="M3.5 2.5h17v9h-17zM4 6.5h16" fill="none" stroke="#fff"/><text x="10.5" y="21" text-anchor="middle" font-size="11" font-family="Liberation Sans" fill="#fff" textLength="11.5" lengthAdjust="spacingAndGlyphs">F6</text></g><g transform="translate(0,0)"><path d="M3.5 2.5h17v9h-17zM4 6.5h16" fill="none" stroke="#ACA899"/><text x="10.5" y="21" text-anchor="middle" font-size="11" font-family="Liberation Sans" fill="#ACA899" textLength="11.5" lengthAdjust="spacingAndGlyphs">F6</text></g></svg></div>
<div class="a" style="left:569px;top:115px;width:26px;height:26px;border-top:1px solid #fff;border-left:1px solid #fff;border-right:1px solid #716F64;border-bottom:1px solid #716F64;box-shadow:inset -1px -1px 0 #ACA899;background:#ECE9D8"><svg class="a" style="left:0;top:0" width="24" height="23" viewBox="0 0 24 23"><g transform="translate(1,1)"><path d="M3.5 2.5h17v9h-17zM4 5.5h16M4 8.5h16" fill="none" stroke="#fff"/><text x="10.5" y="21" text-anchor="middle" font-size="11" font-family="Liberation Sans" fill="#fff" textLength="17" lengthAdjust="spacingAndGlyphs">sF6</text></g><g transform="translate(0,0)"><path d="M3.5 2.5h17v9h-17zM4 5.5h16M4 8.5h16" fill="none" stroke="#ACA899"/><text x="10.5" y="21" text-anchor="middle" font-size="11" font-family="Liberation Sans" fill="#ACA899" textLength="17" lengthAdjust="spacingAndGlyphs">sF6</text></g></svg></div>
<div class="a" style="left:595px;top:115px;width:26px;height:26px;border-top:1px solid #fff;border-left:1px solid #fff;border-right:1px solid #716F64;border-bottom:1px solid #716F64;box-shadow:inset -1px -1px 0 #ACA899;background:#ECE9D8"><svg class="a" style="left:0;top:0" width="24" height="23" viewBox="0 0 24 23"><g transform="translate(1,1)"><path d="M7.5 2v7h6M11 6.5l2.5 2.5-2.5 2.5" fill="none" stroke="#fff"/><text x="10.5" y="21" text-anchor="middle" font-size="11" font-family="Liberation Sans" fill="#fff" textLength="11.5" lengthAdjust="spacingAndGlyphs">F8</text></g><g transform="translate(0,0)"><path d="M7.5 2v7h6M11 6.5l2.5 2.5-2.5 2.5" fill="none" stroke="#ACA899"/><text x="10.5" y="21" text-anchor="middle" font-size="11" font-family="Liberation Sans" fill="#ACA899" textLength="11.5" lengthAdjust="spacingAndGlyphs">F8</text></g></svg></div>
<div class="a" style="left:621px;top:115px;width:26px;height:26px;border-top:1px solid #fff;border-left:1px solid #fff;border-right:1px solid #716F64;border-bottom:1px solid #716F64;box-shadow:inset -1px -1px 0 #ACA899;background:#ECE9D8"><svg class="a" style="left:0;top:0" width="24" height="23" viewBox="0 0 24 23"><g transform="translate(1,1)"><path d="M10.5 1v6M5 7.5h11M5 10.5h11" fill="none" stroke="#fff"/><text x="10.5" y="21" text-anchor="middle" font-size="11" font-family="Liberation Sans" fill="#fff" textLength="11.5" lengthAdjust="spacingAndGlyphs">F7</text></g><g transform="translate(0,0)"><path d="M10.5 1v6M5 7.5h11M5 10.5h11" fill="none" stroke="#ACA899"/><text x="10.5" y="21" text-anchor="middle" font-size="11" font-family="Liberation Sans" fill="#ACA899" textLength="11.5" lengthAdjust="spacingAndGlyphs">F7</text></g></svg></div>
<div class="a" style="left:647px;top:115px;width:26px;height:26px;border-top:1px solid #fff;border-left:1px solid #fff;border-right:1px solid #716F64;border-bottom:1px solid #716F64;box-shadow:inset -1px -1px 0 #ACA899;background:#ECE9D8"><svg class="a" style="left:0;top:0" width="24" height="23" viewBox="0 0 24 23"><g transform="translate(1,1)"><path d="M3.5 2.5h17v9h-17zM4 3l8 4 8-4M4 11l8-4 8 4" fill="none" stroke="#fff"/><text x="10.5" y="21" text-anchor="middle" font-size="11" font-family="Liberation Sans" fill="#fff" textLength="17" lengthAdjust="spacingAndGlyphs">sF5</text></g><g transform="translate(0,0)"><path d="M3.5 2.5h17v9h-17zM4 3l8 4 8-4M4 11l8-4 8 4" fill="none" stroke="#ACA899"/><text x="10.5" y="21" text-anchor="middle" font-size="11" font-family="Liberation Sans" fill="#ACA899" textLength="17" lengthAdjust="spacingAndGlyphs">sF5</text></g></svg></div>
<div class="a" style="left:673px;top:115px;width:26px;height:26px;border-top:1px solid #fff;border-left:1px solid #fff;border-right:1px solid #716F64;border-bottom:1px solid #716F64;box-shadow:inset -1px -1px 0 #ACA899;background:#ECE9D8"><svg class="a" style="left:0;top:0" width="24" height="23" viewBox="0 0 24 23"><g transform="translate(1,1)"><path d="M11.5 0v12M5 6.5h13" fill="none" stroke="#fff"/><text x="10.5" y="21" text-anchor="middle" font-size="11" font-family="Liberation Sans" fill="#fff" textLength="11.5" lengthAdjust="spacingAndGlyphs">F5</text></g><g transform="translate(0,0)"><path d="M11.5 0v12M5 6.5h13" fill="none" stroke="#ACA899"/><text x="10.5" y="21" text-anchor="middle" font-size="11" font-family="Liberation Sans" fill="#ACA899" textLength="11.5" lengthAdjust="spacingAndGlyphs">F5</text></g></svg></div>
<div class="a" style="left:699px;top:115px;width:26px;height:26px;border-top:1px solid #fff;border-left:1px solid #fff;border-right:1px solid #716F64;border-bottom:1px solid #716F64;box-shadow:inset -1px -1px 0 #ACA899;background:#ECE9D8"><svg class="a" style="left:0;top:0" width="24" height="23" viewBox="0 0 24 23"><g transform="translate(1,1)"><path d="M3 4.5h11.5v7" fill="none" stroke="#fff"/><text x="10.5" y="21" text-anchor="middle" font-size="11" font-family="Liberation Sans" fill="#fff" textLength="11.5" lengthAdjust="spacingAndGlyphs">F6</text></g><g transform="translate(0,0)"><path d="M3 4.5h11.5v7" fill="none" stroke="#ACA899"/><text x="10.5" y="21" text-anchor="middle" font-size="11" font-family="Liberation Sans" fill="#ACA899" textLength="11.5" lengthAdjust="spacingAndGlyphs">F6</text></g></svg></div>
<div class="a" style="left:725px;top:115px;width:26px;height:26px;border-top:1px solid #fff;border-left:1px solid #fff;border-right:1px solid #716F64;border-bottom:1px solid #716F64;box-shadow:inset -1px -1px 0 #ACA899;background:#ECE9D8"><svg class="a" style="left:0;top:0" width="24" height="23" viewBox="0 0 24 23"><g transform="translate(1,1)"><path d="M4 3.5h11.5v8M4 6.5h11" fill="none" stroke="#fff"/><text x="10.5" y="21" text-anchor="middle" font-size="11" font-family="Liberation Sans" fill="#fff" textLength="11.5" lengthAdjust="spacingAndGlyphs">F7</text></g><g transform="translate(0,0)"><path d="M4 3.5h11.5v8M4 6.5h11" fill="none" stroke="#ACA899"/><text x="10.5" y="21" text-anchor="middle" font-size="11" font-family="Liberation Sans" fill="#ACA899" textLength="11.5" lengthAdjust="spacingAndGlyphs">F7</text></g></svg></div>
<div class="a" style="left:751px;top:115px;width:26px;height:26px;border-top:1px solid #fff;border-left:1px solid #fff;border-right:1px solid #716F64;border-bottom:1px solid #716F64;box-shadow:inset -1px -1px 0 #ACA899;background:#ECE9D8"><svg class="a" style="left:0;top:0" width="24" height="23" viewBox="0 0 24 23"><g transform="translate(1,1)"><path d="M14.5 0v9.5H3" fill="none" stroke="#fff"/><text x="10.5" y="21" text-anchor="middle" font-size="11" font-family="Liberation Sans" fill="#fff" textLength="11.5" lengthAdjust="spacingAndGlyphs">F8</text></g><g transform="translate(0,0)"><path d="M14.5 0v9.5H3" fill="none" stroke="#ACA899"/><text x="10.5" y="21" text-anchor="middle" font-size="11" font-family="Liberation Sans" fill="#ACA899" textLength="11.5" lengthAdjust="spacingAndGlyphs">F8</text></g></svg></div>
<div class="a" style="left:777px;top:115px;width:26px;height:26px;border-top:1px solid #fff;border-left:1px solid #fff;border-right:1px solid #716F64;border-bottom:1px solid #716F64;box-shadow:inset -1px -1px 0 #ACA899;background:#ECE9D8"><svg class="a" style="left:0;top:0" width="24" height="23" viewBox="0 0 24 23"><g transform="translate(1,1)"><path d="M14.5 0v8.5H4M4 10.5h12" fill="none" stroke="#fff"/><text x="10.5" y="21" text-anchor="middle" font-size="11" font-family="Liberation Sans" fill="#fff" textLength="11.5" lengthAdjust="spacingAndGlyphs">F9</text></g><g transform="translate(0,0)"><path d="M14.5 0v8.5H4M4 10.5h12" fill="none" stroke="#ACA899"/><text x="10.5" y="21" text-anchor="middle" font-size="11" font-family="Liberation Sans" fill="#ACA899" textLength="11.5" lengthAdjust="spacingAndGlyphs">F9</text></g></svg></div>
<div class="a" style="left:803px;top:115px;width:26px;height:26px;border-top:1px solid #fff;border-left:1px solid #fff;border-right:1px solid #716F64;border-bottom:1px solid #716F64;box-shadow:inset -1px -1px 0 #ACA899;background:#ECE9D8"><svg class="a" style="left:0;top:0" width="24" height="23" viewBox="0 0 24 23"><g transform="translate(1,1)"><path d="M11.5 0v8" fill="none" stroke="#fff"/><text x="10.5" y="21" text-anchor="middle" font-size="11" font-family="Liberation Sans" fill="#fff" textLength="17" lengthAdjust="spacingAndGlyphs">sF9</text></g><g transform="translate(0,0)"><path d="M11.5 0v8" fill="none" stroke="#ACA899"/><text x="10.5" y="21" text-anchor="middle" font-size="11" font-family="Liberation Sans" fill="#ACA899" textLength="17" lengthAdjust="spacingAndGlyphs">sF9</text></g></svg></div>
<div class="a" style="left:835px;top:115px;width:26px;height:26px;border-top:1px solid #fff;border-left:1px solid #fff;border-right:1px solid #716F64;border-bottom:1px solid #716F64;box-shadow:inset -1px -1px 0 #ACA899;background:#ECE9D8"><svg class="a" style="left:0;top:0" width="24" height="23" viewBox="0 0 24 23"><g transform="translate(1,1)"><path d="M3.5 2.5h16v9h-16z" fill="none" stroke="#fff" stroke-dasharray="2 1"/><text x="10.5" y="21" text-anchor="middle" font-size="11" font-family="Liberation Sans" fill="#fff" textLength="11.5" lengthAdjust="spacingAndGlyphs">c1</text></g><g transform="translate(0,0)"><path d="M3.5 2.5h16v9h-16z" fill="none" stroke="#ACA899" stroke-dasharray="2 1"/><text x="10.5" y="21" text-anchor="middle" font-size="11" font-family="Liberation Sans" fill="#ACA899" textLength="11.5" lengthAdjust="spacingAndGlyphs">c1</text></g></svg></div>
<div class="a" style="left:861px;top:115px;width:26px;height:26px;border-top:1px solid #fff;border-left:1px solid #fff;border-right:1px solid #716F64;border-bottom:1px solid #716F64;box-shadow:inset -1px -1px 0 #ACA899;background:#ECE9D8"><svg class="a" style="left:0;top:0" width="24" height="23" viewBox="0 0 24 23"><g transform="translate(1,1)"><path d="M3.5 2.5h16v9h-16z" fill="none" stroke="#fff" stroke-dasharray="2 1"/><text x="11.5" y="10" text-anchor="middle" font-size="9" fill="#fff" font-family="Liberation Sans" textLength="10" lengthAdjust="spacingAndGlyphs">SC</text><text x="10.5" y="21" text-anchor="middle" font-size="11" font-family="Liberation Sans" fill="#fff" textLength="11.5" lengthAdjust="spacingAndGlyphs">c2</text></g><g transform="translate(0,0)"><path d="M3.5 2.5h16v9h-16z" fill="none" stroke="#ACA899" stroke-dasharray="2 1"/><text x="11.5" y="10" text-anchor="middle" font-size="9" fill="#ACA899" font-family="Liberation Sans" textLength="10" lengthAdjust="spacingAndGlyphs">SC</text><text x="10.5" y="21" text-anchor="middle" font-size="11" font-family="Liberation Sans" fill="#ACA899" textLength="11.5" lengthAdjust="spacingAndGlyphs">c2</text></g></svg></div>
<div class="a" style="left:887px;top:115px;width:26px;height:26px;border-top:1px solid #fff;border-left:1px solid #fff;border-right:1px solid #716F64;border-bottom:1px solid #716F64;box-shadow:inset -1px -1px 0 #ACA899;background:#ECE9D8"><svg class="a" style="left:0;top:0" width="24" height="23" viewBox="0 0 24 23"><g transform="translate(1,1)"><path d="M3.5 2.5h16v9h-16z" fill="none" stroke="#fff" stroke-dasharray="2 1"/><text x="11.5" y="10" text-anchor="middle" font-size="9" fill="#fff" font-family="Liberation Sans" textLength="10" lengthAdjust="spacingAndGlyphs">SE</text><text x="10.5" y="21" text-anchor="middle" font-size="11" font-family="Liberation Sans" fill="#fff" textLength="11.5" lengthAdjust="spacingAndGlyphs">c3</text></g><g transform="translate(0,0)"><path d="M3.5 2.5h16v9h-16z" fill="none" stroke="#ACA899" stroke-dasharray="2 1"/><text x="11.5" y="10" text-anchor="middle" font-size="9" fill="#ACA899" font-family="Liberation Sans" textLength="10" lengthAdjust="spacingAndGlyphs">SE</text><text x="10.5" y="21" text-anchor="middle" font-size="11" font-family="Liberation Sans" fill="#ACA899" textLength="11.5" lengthAdjust="spacingAndGlyphs">c3</text></g></svg></div>
<div class="a" style="left:913px;top:115px;width:26px;height:26px;border-top:1px solid #fff;border-left:1px solid #fff;border-right:1px solid #716F64;border-bottom:1px solid #716F64;box-shadow:inset -1px -1px 0 #ACA899;background:#ECE9D8"><svg class="a" style="left:0;top:0" width="24" height="23" viewBox="0 0 24 23"><g transform="translate(1,1)"><path d="M3.5 2.5h16v9h-16z" fill="none" stroke="#fff" stroke-dasharray="2 1"/><text x="11.5" y="10" text-anchor="middle" font-size="9" fill="#fff" font-family="Liberation Sans" textLength="10" lengthAdjust="spacingAndGlyphs">ST</text><text x="10.5" y="21" text-anchor="middle" font-size="11" font-family="Liberation Sans" fill="#fff" textLength="11.5" lengthAdjust="spacingAndGlyphs">c4</text></g><g transform="translate(0,0)"><path d="M3.5 2.5h16v9h-16z" fill="none" stroke="#ACA899" stroke-dasharray="2 1"/><text x="11.5" y="10" text-anchor="middle" font-size="9" fill="#ACA899" font-family="Liberation Sans" textLength="10" lengthAdjust="spacingAndGlyphs">ST</text><text x="10.5" y="21" text-anchor="middle" font-size="11" font-family="Liberation Sans" fill="#ACA899" textLength="11.5" lengthAdjust="spacingAndGlyphs">c4</text></g></svg></div>
<div class="a" style="left:939px;top:115px;width:26px;height:26px;border-top:1px solid #fff;border-left:1px solid #fff;border-right:1px solid #716F64;border-bottom:1px solid #716F64;box-shadow:inset -1px -1px 0 #ACA899;background:#ECE9D8"><svg class="a" style="left:0;top:0" width="24" height="23" viewBox="0 0 24 23"><g transform="translate(1,1)"><path d="M3.5 2.5h16v9h-16z" fill="none" stroke="#fff" stroke-dasharray="2 1"/><text x="11.5" y="10" text-anchor="middle" font-size="9" fill="#fff" font-family="Liberation Sans" textLength="5" lengthAdjust="spacingAndGlyphs">R</text><text x="10.5" y="21" text-anchor="middle" font-size="11" font-family="Liberation Sans" fill="#fff" textLength="11.5" lengthAdjust="spacingAndGlyphs">c5</text></g><g transform="translate(0,0)"><path d="M3.5 2.5h16v9h-16z" fill="none" stroke="#ACA899" stroke-dasharray="2 1"/><text x="11.5" y="10" text-anchor="middle" font-size="9" fill="#ACA899" font-family="Liberation Sans" textLength="5" lengthAdjust="spacingAndGlyphs">R</text><text x="10.5" y="21" text-anchor="middle" font-size="11" font-family="Liberation Sans" fill="#ACA899" textLength="11.5" lengthAdjust="spacingAndGlyphs">c5</text></g></svg></div>
<div class="a" style="left:965px;top:115px;width:26px;height:26px;border-top:1px solid #fff;border-left:1px solid #fff;border-right:1px solid #716F64;border-bottom:1px solid #716F64;box-shadow:inset -1px -1px 0 #ACA899;background:#ECE9D8"><svg class="a" style="left:0;top:0" width="24" height="23" viewBox="0 0 24 23"><g transform="translate(1,1)"><path d="M12.5 2v8" fill="none" stroke="#fff"/><text x="10.5" y="21" text-anchor="middle" font-size="11" font-family="Liberation Sans" fill="#fff" textLength="17" lengthAdjust="spacingAndGlyphs">aF5</text></g><g transform="translate(0,0)"><path d="M12.5 2v8" fill="none" stroke="#ACA899"/><text x="10.5" y="21" text-anchor="middle" font-size="11" font-family="Liberation Sans" fill="#ACA899" textLength="17" lengthAdjust="spacingAndGlyphs">aF5</text></g></svg></div>
<div class="a" style="left:991px;top:115px;width:26px;height:26px;border-top:1px solid #fff;border-left:1px solid #fff;border-right:1px solid #716F64;border-bottom:1px solid #716F64;box-shadow:inset -1px -1px 0 #ACA899;background:#ECE9D8"><svg class="a" style="left:0;top:0" width="24" height="23" viewBox="0 0 24 23"><g transform="translate(1,1)"><path d="M3 4.5h11.5v7" fill="none" stroke="#fff"/><text x="10.5" y="21" text-anchor="middle" font-size="11" font-family="Liberation Sans" fill="#fff" textLength="17" lengthAdjust="spacingAndGlyphs">aF7</text></g><g transform="translate(0,0)"><path d="M3 4.5h11.5v7" fill="none" stroke="#ACA899"/><text x="10.5" y="21" text-anchor="middle" font-size="11" font-family="Liberation Sans" fill="#ACA899" textLength="17" lengthAdjust="spacingAndGlyphs">aF7</text></g></svg></div>
<div class="a" style="left:1017px;top:115px;width:26px;height:26px;border-top:1px solid #fff;border-left:1px solid #fff;border-right:1px solid #716F64;border-bottom:1px solid #716F64;box-shadow:inset -1px -1px 0 #ACA899;background:#ECE9D8"><svg class="a" style="left:0;top:0" width="24" height="23" viewBox="0 0 24 23"><g transform="translate(1,1)"><path d="M14.5 0v8.5H4M4 10.5h12" fill="none" stroke="#fff"/><text x="10.5" y="21" text-anchor="middle" font-size="11" font-family="Liberation Sans" fill="#fff" textLength="6" lengthAdjust="spacingAndGlyphs">a</text></g><g transform="translate(0,0)"><path d="M14.5 0v8.5H4M4 10.5h12" fill="none" stroke="#ACA899"/><text x="10.5" y="21" text-anchor="middle" font-size="11" font-family="Liberation Sans" fill="#ACA899" textLength="6" lengthAdjust="spacingAndGlyphs">a</text></g></svg></div>
<div class="a" style="left:6px;top:149px;width:23px;height:22px;border-top:1px solid #fff;border-left:1px solid #fff;border-right:1px solid #716F64;border-bottom:1px solid #716F64;box-shadow:inset -1px -1px 0 #ACA899;background:#ECE9D8"><svg class="a" style="left:2px;top:2px" width="16" height="16" viewBox="0 0 16 16"><rect x="2" y="1" width="4" height="3" fill="#ACA899"/><rect x="9" y="1" width="4" height="3" fill="#ACA899"/><path d="M4 4v2h7v-2M7.5 6v3" fill="none" stroke="#ACA899"/><rect x="5.5" y="9.5" width="4" height="5" fill="none" stroke="#ACA899"/></svg></div>
<div class="a" style="left:29px;top:149px;width:23px;height:22px;border-top:1px solid #fff;border-left:1px solid #fff;border-right:1px solid #716F64;border-bottom:1px solid #716F64;box-shadow:inset -1px -1px 0 #ACA899;background:#ECE9D8"><svg class="a" style="left:2px;top:2px" width="16" height="16" viewBox="0 0 16 16"><rect x="1.5" y="1.5" width="6" height="11" fill="none" stroke="#ACA899"/><path d="M3 4h3M3 6h3M3 8h3" stroke="#ACA899"/><path d="M8 14l3-10 4 0v11h-12v-3z" fill="#ACA899"/></svg></div>
<div class="a" style="left:390px;top:149px;width:23px;height:22px;border-top:1px solid #fff;border-left:1px solid #fff;border-right:1px solid #716F64;border-bottom:1px solid #716F64;box-shadow:inset -1px -1px 0 #ACA899;background:#ECE9D8"><svg class="a" style="left:2px;top:2px" width="16" height="16" viewBox="0 0 16 16"><rect x="1.5" y="2.5" width="4" height="4" fill="none" stroke="#ACA899"/><path d="M3.5 7v7h4M5 4.5h3" stroke="#ACA899" fill="none"/><rect x="9.5" y="1.5" width="5" height="13" fill="none" stroke="#ACA899"/><path d="M11 4h2M11 6h2M11 8h2M11 10h2M11 12h2" stroke="#ACA899"/></svg></div>
<div class="a" style="left:124px;top:175px;width:899px;height:542px;background:#fff;border-top:1px solid #716F64;border-left:1px solid #ACA899;box-shadow:inset 2px 0 0 #716F64"></div>
<div class="a" style="left:127px;top:238px;width:817px;height:372px;background:#C0C0C0"></div>
<svg class="a" style="left:0;top:0" width="1024" height="768" viewBox="0 0 1024 768">
<defs><clipPath id="lv"><rect x="127" y="176" width="878" height="540"/></clipPath></defs>
<g clip-path="url(#lv)">
<rect x="208" y="301" width="70" height="60" fill="none" stroke="#0000A8" stroke-width="2" shape-rendering="crispEdges"/>
<path fill="none" stroke="#000" stroke-width="1" shape-rendering="crispEdges" d="M207.5 150V716M943.5 150V716M207 207.5H237M237.5 197V217M249.5 197V217M250 207.5H280M279.5 150V208M207 269.5H237M237.5 259V279M249.5 259V279M250 269.5H309M309.5 259V279M321.5 259V279M322 269.5H381M381.5 259V279M393.5 259V279M394 269.5H453M453.5 259V279M465.5 259V279M466 269.5H525M525.5 259V279M537.5 259V279M538 269.5H857M207 331.5H237M237.5 321V341M249.5 321V341M250 331.5H280M279.5 269V332M567.5 269V332M567 331.5H857M207 393.5H237M237.5 383V403M249.5 383V403M250 393.5H309M309.5 383V403M321.5 383V403M322 393.5H381M381.5 383V403M393.5 383V403M394 393.5H453M453.5 383V403M465.5 383V403M466 393.5H525M525.5 383V403M537.5 383V403M538 393.5H597M597.5 383V403M609.5 383V403M610 393.5H669M669.5 383V403M681.5 383V403M682 393.5H863M279 455.5H309M309.5 445V465M321.5 445V465M322 455.5H352M279.5 393V456M351.5 393V456M639.5 393V456M639 455.5H857M920 393.5H936M207 517.5H215M264 517.5H787M791 508.5H786.5V526.5H791M936 508.5H940.5V526.5H936M941 517.5H943M207 641.5H237M237.5 631V651M249.5 631V651M250 641.5H309M309.5 631V651M321.5 631V651M322 641.5H381M381.5 631V651M393.5 631V651M394 641.5H857M207 703.5H237M237.5 693V713M249.5 693V713M250 703.5H280M279.5 641V704"/>
<path fill="none" stroke="#000" stroke-width="1" d="M303 280L327 260M375 280L399 260M447 280L471 260M519 280L543 260M862.5 260L858.5 264V268L857.5 269.5L858.5 270.5V274L862.5 278M936.5 260L940.5 264V268L942.5 269.5L940.5 270.5V274L936.5 278M862.5 322L858.5 326V330L857.5 331.5L858.5 332.5V336L862.5 340M936.5 322L940.5 326V330L942.5 331.5L940.5 332.5V336L936.5 340M231 404L255 384M375 404L399 384M447 404L471 384M519 404L543 384M591 404L615 384M663 404L687 384M862.5 446L858.5 450V454L857.5 455.5L858.5 456.5V460L862.5 464M936.5 446L940.5 450V454L942.5 455.5L940.5 456.5V460L936.5 464M928 384L935.5 393.5L928 403M272 508L279.5 517.5L272 527M303 652L327 632M375 652L399 632M862.5 632L858.5 636V640L857.5 641.5L858.5 642.5V646L862.5 650M936.5 632L940.5 636V640L942.5 641.5L940.5 642.5V646L936.5 650"/>
<g fill="#000" stroke="#000" stroke-width="0.15" font-family="Liberation Serif" font-size="16.5"><text x="227.2" y="191" textLength="32.5" lengthAdjust="spacingAndGlyphs">X006</text><text x="227.2" y="253" textLength="32.5" lengthAdjust="spacingAndGlyphs">X007</text><text x="299.2" y="253" textLength="32.5" lengthAdjust="spacingAndGlyphs">X010</text><text x="371.2" y="253" textLength="32.5" lengthAdjust="spacingAndGlyphs">Y007</text><text x="443.2" y="253" textLength="32.5" lengthAdjust="spacingAndGlyphs">Y005</text><text x="523.2" y="253" textLength="16.5" lengthAdjust="spacingAndGlyphs">T0</text><text x="227.2" y="315" textLength="32.5" lengthAdjust="spacingAndGlyphs">Y006</text><text x="862.2" y="273" textLength="32.5" lengthAdjust="spacingAndGlyphs">Y006</text><text x="862.2" y="335" textLength="16.5" lengthAdjust="spacingAndGlyphs">T0</text><text x="883.2" y="315" textLength="32.5" lengthAdjust="spacingAndGlyphs">K100</text><text x="187.5" y="273" textLength="16.5" lengthAdjust="spacingAndGlyphs">41</text><text x="235.2" y="377" textLength="16.5" lengthAdjust="spacingAndGlyphs">T2</text><text x="299.2" y="377" textLength="32.5" lengthAdjust="spacingAndGlyphs">X011</text><text x="371.2" y="377" textLength="32.5" lengthAdjust="spacingAndGlyphs">X012</text><text x="443.2" y="377" textLength="32.5" lengthAdjust="spacingAndGlyphs">Y006</text><text x="515.2" y="377" textLength="32.5" lengthAdjust="spacingAndGlyphs">Y004</text><text x="587.2" y="377" textLength="32.5" lengthAdjust="spacingAndGlyphs">Y005</text><text x="667.2" y="377" textLength="16.5" lengthAdjust="spacingAndGlyphs">T2</text><text x="299.2" y="439" textLength="32.5" lengthAdjust="spacingAndGlyphs">Y007</text><text x="862.2" y="459" textLength="16.5" lengthAdjust="spacingAndGlyphs">T2</text><text x="883.2" y="439" textLength="32.5" lengthAdjust="spacingAndGlyphs">K100</text><text x="862.2" y="397" textLength="16.5" lengthAdjust="spacingAndGlyphs">K0</text><text x="187.5" y="397" textLength="16.5" lengthAdjust="spacingAndGlyphs">53</text><text x="214.2" y="521" textLength="16.5" lengthAdjust="spacingAndGlyphs">K0</text><text x="790.2" y="521" textLength="32.5" lengthAdjust="spacingAndGlyphs">ALTP</text><text x="862.2" y="521" textLength="32.5" lengthAdjust="spacingAndGlyphs">Y007</text><text x="227.2" y="625" textLength="32.5" lengthAdjust="spacingAndGlyphs">X014</text><text x="299.2" y="625" textLength="32.5" lengthAdjust="spacingAndGlyphs">Y011</text><text x="371.2" y="625" textLength="32.5" lengthAdjust="spacingAndGlyphs">X013</text><text x="227.2" y="687" textLength="32.5" lengthAdjust="spacingAndGlyphs">Y010</text><text x="862.2" y="645" textLength="32.5" lengthAdjust="spacingAndGlyphs">Y010</text><text x="187.5" y="645" textLength="16.5" lengthAdjust="spacingAndGlyphs">68</text></g>
</g></svg>
<div class="a" style="left:1005px;top:176px;width:17px;height:540px;background:linear-gradient(90deg,#F3F1EC,#FEFEFA 40%,#F5F4EE)"></div>
<div class="a" style="left:1006px;top:177px;width:15px;height:16px;border:1px solid #fff;border-radius:2px;background:linear-gradient(135deg,#C8D7FB,#B5C9F7 60%,#A9C0F5)"><svg class="a" style="left:2px;top:4px" width="10" height="7"><path d="M1 5.5L5 1.5 9 5.5" fill="none" stroke="#4D6185" stroke-width="2"/></svg></div>
<div class="a" style="left:1006px;top:300px;width:15px;height:17px;border:1px solid #fff;border-radius:2px;background:linear-gradient(135deg,#C8D7FB,#B5C9F7 60%,#A9C0F5)"><svg class="a" style="left:3px;top:4px" width="8" height="8"><path d="M0 1.5h8M0 3.5h8M0 5.5h8" stroke="#EEF4FE"/><path d="M0 2h8M0 4h8M0 6h8" stroke="#8CA5D8" stroke-width=".8"/></svg></div>
<div class="a" style="left:1006px;top:699px;width:15px;height:16px;border:1px solid #fff;border-radius:2px;background:linear-gradient(135deg,#C8D7FB,#B5C9F7 60%,#A9C0F5)"><svg class="a" style="left:2px;top:4px" width="10" height="7"><path d="M1 1.5L5 5.5 9 1.5" fill="none" stroke="#4D6185" stroke-width="2"/></svg></div>
<div class="a" style="left:0;top:174px;width:124px;height:1px;background:#fff"></div>
<div class="a" style="left:120px;top:176px;width:1px;height:540px;background:#FFFFF8"></div>
<div class="a" style="left:4px;top:182px;width:92px;height:3px;border-top:1px solid #fff;border-bottom:1px solid #ACA899"></div>
<div class="a" style="left:4px;top:186px;width:92px;height:3px;border-top:1px solid #fff;border-bottom:1px solid #ACA899"></div>
<div class="a" style="left:103px;top:179px;width:12px;height:12px;border-top:1px solid #fff;border-left:1px solid #fff;border-right:1px solid #716F64;border-bottom:1px solid #716F64"><svg class="a" style="left:1px;top:1px" width="9" height="9"><path d="M1.5 1.5l6 6M7.5 1.5l-6 6" stroke="#000" stroke-width="1.6"/></svg></div>
<div class="a" style="left:4px;top:197px;width:113px;height:497px;border-top:1px solid #fff;border-left:1px solid #fff"></div>
<div class="a" style="left:6px;top:199px;width:110px;height:493px;border:2px solid #76746A;background:#fff"></div>
<div class="a" style="left:21px;top:210px;width:6px;height:1px;background-image:linear-gradient(90deg,#A0A0A0 50%,transparent 50%);background-size:2px 1px"></div>
<div class="a" style="left:35px;top:216px;width:1px;height:58px;background-image:linear-gradient(#A0A0A0 50%,transparent 50%);background-size:1px 2px"></div>
<div class="a" style="left:36px;top:225px;width:10px;height:1px;background-image:linear-gradient(90deg,#A0A0A0 50%,transparent 50%);background-size:2px 1px"></div>
<div class="a" style="left:36px;top:241px;width:10px;height:1px;background-image:linear-gradient(90deg,#A0A0A0 50%,transparent 50%);background-size:2px 1px"></div>
<div class="a" style="left:36px;top:257px;width:10px;height:1px;background-image:linear-gradient(90deg,#A0A0A0 50%,transparent 50%);background-size:2px 1px"></div>
<div class="a" style="left:36px;top:273px;width:10px;height:1px;background-image:linear-gradient(90deg,#A0A0A0 50%,transparent 50%);background-size:2px 1px"></div>
<div class="a" style="left:12px;top:206px;width:9px;height:9px;border:1px solid #A8A8A8;background:#fff"><div class="a" style="left:1px;top:3px;width:5px;height:1px;background:#000"></div></div>
<div class="a" style="left:31px;top:221px;width:9px;height:9px;border:1px solid #A8A8A8;background:#fff"><div class="a" style="left:1px;top:3px;width:5px;height:1px;background:#000"></div><div class="a" style="left:3px;top:1px;width:1px;height:5px;background:#000"></div></div>
<div class="a" style="left:31px;top:237px;width:9px;height:9px;border:1px solid #A8A8A8;background:#fff"><div class="a" style="left:1px;top:3px;width:5px;height:1px;background:#000"></div><div class="a" style="left:3px;top:1px;width:1px;height:5px;background:#000"></div></div>
<div class="a" style="left:31px;top:253px;width:9px;height:9px;border:1px solid #A8A8A8;background:#fff"><div class="a" style="left:1px;top:3px;width:5px;height:1px;background:#000"></div><div class="a" style="left:3px;top:1px;width:1px;height:5px;background:#000"></div></div>
<svg class="a" style="left:27px;top:201px" width="16" height="15"><path d="M0 0h12l3 3v12H0z" fill="#30D030" stroke="#008000"/><path d="M3 8l4-4 5 3-4 5z" fill="none" stroke="#808000"/><circle cx="8" cy="4" r="2" fill="#D040D0"/><circle cx="11" cy="8" r="2" fill="#FFFF00"/><circle cx="4" cy="8" r="2" fill="#40E0E0"/></svg>
<svg class="a" style="left:46px;top:217px" width="16" height="16"><path d="M0.5 0.5h11l3 3v11h-14z" fill="#fff" stroke="#000"/><path d="M1 15.5h14.5V4" stroke="#000" fill="none" stroke-width="1"/><g shape-rendering="crispEdges"><path d="M1 4.5h2M3.5 3v3M5.5 3v3M6 4.5h3M1 8.5h2M3.5 7v3M5.5 7v3M6 8.5h2M7.5 9v3M8 11.5h2" stroke="#0000C0" fill="none"/><path d="M9 4.5h4M8 8.5h5M10 11.5h3M11.5 3v3M11.5 7v3M11.5 10v3" stroke="#0000C0" stroke-dasharray="1 1" fill="none"/></g></svg>
<svg class="a" style="left:46px;top:233px" width="16" height="16"><path d="M0.5 0.5h11l3 3v11h-14z" fill="#fff" stroke="#000"/><path d="M1 15.5h14.5V4" stroke="#000" fill="none" stroke-width="1"/><rect x="2" y="2" width="4" height="3" fill="#606060"/><rect x="8" y="2" width="4" height="3" fill="#E0E000"/><path d="M4 5l3 4 3-4" stroke="#0000C0" fill="none"/><rect x="5" y="9" width="4" height="4" fill="none" stroke="#C000C0"/></svg>
<svg class="a" style="left:46px;top:249px" width="16" height="16"><path d="M0.5 0.5h11l3 3v11h-14z" fill="#fff" stroke="#000"/><path d="M1 15.5h14.5V4" stroke="#000" fill="none" stroke-width="1"/><path d="M3 12l9-8" stroke="#30C030" stroke-width="2"/><rect x="4" y="6" width="3" height="3" fill="#D04040"/><rect x="7" y="7" width="3" height="3" fill="#404040"/></svg>
<svg class="a" style="left:46px;top:265px" width="16" height="16"><path d="M0.5 0.5h11l3 3v11h-14z" fill="#fff" stroke="#000"/><path d="M1 15.5h14.5V4" stroke="#000" fill="none" stroke-width="1"/><rect x="2.5" y="2.5" width="7" height="9" fill="#fff" stroke="#0000C0"/><path d="M4 5h4M4 7h4M4 9h4" stroke="#0000C0"/><rect x="8" y="9" width="5" height="5" fill="#606060"/><rect x="9" y="10" width="3" height="3" fill="#D04040"/></svg>
<div style="position:absolute;font-size:12px;line-height:16px;white-space:nowrap;overflow:hidden;left:47px;top:201px;width:67px"><span style="font-family:'Liberation Sans T';font-size:12px;line-height:0;font-style:normal;vertical-align:-2px;">用交替输出指令</span></div>
<div style="position:absolute;font-size:12px;line-height:16px;white-space:nowrap;overflow:hidden;left:66px;top:217px;width:48px"><span style="font-family:'Liberation Sans T';font-size:12px;line-height:0;font-style:normal;vertical-align:-2px;">程序</span></div>
<div style="position:absolute;font-size:12px;line-height:16px;white-space:nowrap;overflow:hidden;left:66px;top:233px;width:48px"><span style="font-family:'Liberation Sans T';font-size:12px;line-height:0;font-style:normal;vertical-align:-2px;">软元件注释</span></div>
<div style="position:absolute;font-size:12px;line-height:16px;white-space:nowrap;overflow:hidden;left:66px;top:249px;width:48px"><span style="font-family:'Liberation Sans T';font-size:12px;line-height:0;font-style:normal;vertical-align:-2px;">参数</span></div>
<div style="position:absolute;font-size:12px;line-height:16px;white-space:nowrap;overflow:hidden;left:66px;top:265px;width:48px"><span style="font-family:'Liberation Sans T';font-size:12px;line-height:0;font-style:normal;vertical-align:-2px;">软元件内存</span></div>
<div class="a" style="left:8px;top:670px;width:106px;height:16px;background:linear-gradient(#F3F1EA,#FEFEFB 50%,#F0EEE6)"></div>
<div class="a" style="left:9px;top:671px;width:15px;height:15px;border:1px solid #fff;border-radius:2px;background:linear-gradient(135deg,#C8D7FB,#B5C9F7 60%,#A9C0F5);box-shadow:0 0 0 0 #000"><svg class="a" style="left:3px;top:3px" width="8" height="8"><path d="M6 0.5L2.5 4 6 7.5" fill="none" stroke="#4D6185" stroke-width="2"/></svg></div>
<div class="a" style="left:26px;top:671px;width:33px;height:15px;border:1px solid #fff;border-radius:2px;background:linear-gradient(135deg,#C8D7FB,#B5C9F7 60%,#A9C0F5);box-shadow:0 0 0 0 #000"><svg class="a" style="left:11px;top:3px" width="10" height="8"><path d="M1.5 1v6M3.5 1v6M5.5 1v6M7.5 1v6" stroke="#EEF4FE"/><path d="M2 1v6M4 1v6M6 1v6M8 1v6" stroke="#8CA5D8" stroke-width=".8"/></svg></div>
<div class="a" style="left:96px;top:671px;width:15px;height:15px;border:1px solid #fff;border-radius:2px;background:linear-gradient(135deg,#C8D7FB,#B5C9F7 60%,#A9C0F5);box-shadow:0 0 0 0 #000"><svg class="a" style="left:3px;top:3px" width="8" height="8"><path d="M2 0.5L5.5 4 2 7.5" fill="none" stroke="#4D6185" stroke-width="2"/></svg></div>
<div class="a" style="left:6px;top:691px;width:50px;height:20px;border-left:1px solid #fff;border-right:1px solid #716F64;border-bottom:1px solid #716F64;border-radius:0 0 2px 2px;background:#ECE9D8"></div>
<div class="a" style="left:56px;top:691px;width:60px;height:1px;background:#716F64"></div>
<div style="position:absolute;font-size:12px;line-height:16px;white-space:nowrap;overflow:hidden;left:12px;top:694px"><span style="font-family:'Liberation Sans T';font-size:12px;line-height:0;font-style:normal;vertical-align:-2px;">工程</span></div>
<div class="a" style="left:0;top:717px;width:124px;height:1px;background:#ACA899"></div>
<div class="a" style="left:0;top:718px;width:1024px;height:1px;background:#fff"></div>
<span class="a" style="left:2px;top:722px;font-size:12px;line-height:14px"><span style="font-family:'Liberation Sans T';font-size:12px;line-height:0;font-style:normal;vertical-align:-2px;">准备完毕</span></span>
<div class="a" style="left:405px;top:721px;width:85px;height:17px;border-top:1px solid #ACA899;border-left:1px solid #ACA899;border-right:1px solid #fff"><svg class="a" style="left:1px;top:0px" width="40" height="16"><text x="1" y="12" textLength="23" lengthAdjust="spacingAndGlyphs" font-family="Liberation Mono" font-size="12.5">FX1S</text></svg></div>
<div class="a" style="left:493px;top:721px;width:155px;height:17px;border-top:1px solid #ACA899;border-left:1px solid #ACA899;border-right:1px solid #fff"><span class="a" style="left:1px;top:1px;font-size:12px;line-height:14px"><span style="font-family:'Liberation Sans T';font-size:12px;line-height:0;font-style:normal;vertical-align:-2px;">本站</span></span></div>
<div class="a" style="left:664px;top:721px;width:95px;height:17px;border-top:1px solid #ACA899;border-left:1px solid #ACA899;border-right:1px solid #fff"></div>
<div class="a" style="left:762px;top:721px;width:75px;height:17px;border-top:1px solid #ACA899;border-left:1px solid #ACA899;border-right:1px solid #fff"></div>
<div class="a" style="left:840px;top:721px;width:55px;height:17px;border-top:1px solid #ACA899;border-left:1px solid #ACA899;border-right:1px solid #fff"><span class="a" style="left:1px;top:1px;font-size:12px;line-height:14px"><span style="font-family:'Liberation Sans T';font-size:12px;line-height:0;font-style:normal;vertical-align:-2px;">改写</span></span></div>
<div class="a" style="left:898px;top:721px;width:41px;height:17px;border-top:1px solid #ACA899;border-left:1px solid #ACA899;border-right:1px solid #fff"></div>
<div class="a" style="left:942px;top:721px;width:23px;height:17px;border-top:1px solid #ACA899;border-left:1px solid #ACA899;border-right:1px solid #fff"></div>
<div class="a" style="left:968px;top:721px;width:23px;height:17px;border-top:1px solid #ACA899;border-left:1px solid #ACA899;border-right:1px solid #fff"><svg class="a" style="left:1px;top:0px" width="40" height="16"><text x="1" y="12" textLength="17" lengthAdjust="spacingAndGlyphs" font-family="Liberation Mono" font-size="12.5">NUM</text></svg></div>
<div class="a" style="left:994px;top:721px;width:30px;height:17px;border-top:1px solid #ACA899;border-left:1px solid #ACA899;border-right:1px solid #fff"></div>
<div class="a" style="left:0;top:736px;width:1024px;height:1px;background:#F4F2EA"></div>
<div class="a" style="left:0;top:737px;width:1024px;height:31px;background:linear-gradient(#2A5ED0 0,#2A5ED0 1px,#3A78E8 1px,#3A78E8 2px,#2C66DA 3px,#2A62D8 25px,#2456C8 28px,#1E48B0 31px)"></div>
<div class="a" style="left:0;top:737px;width:97px;height:31px;border-radius:0 10px 10px 0;background:linear-gradient(#3C963C 0,#5CB55C 2px,#43A443 5px,#389A3A 14px,#328C34 24px,#2B7A2D 31px);box-shadow:inset -3px 0 3px #24662A"></div>
<svg class="a" style="left:10px;top:744px" width="20" height="19"><path d="M1 3q4-3 8 0v7q-4-3-8 0z" fill="#F05020"/><path d="M10 3q4-2 8 0v7q-4-2-8 0z" fill="#60C030"/><path d="M1 11q4-3 8 0v7q-4-3-8 0z" fill="#3080F0"/><path d="M10 11q4-2 8 0v7q-4-2-8 0z" fill="#F8C020"/></svg>
<span class="a" style="left:36px;top:740px;color:#fff;font-size:20px;font-style:italic;line-height:24px;text-shadow:1px 1px 1px #1A4A1A"><span style="font-family:'Liberation Sans T';font-size:20px;line-height:0;font-style:normal;vertical-align:-2px;">开始</span></span>
<svg class="a" style="left:109px;top:743px" width="18" height="18"><rect x="1" y="2" width="15" height="11" fill="#3060D0" stroke="#404040"/><rect x="3" y="4" width="11" height="7" fill="#60A8F0"/><path d="M3 9l4-3 4 3 3-2v4H3z" fill="#40A040"/><rect x="6" y="13" width="5" height="3" fill="#A0A0A0"/></svg>
<svg class="a" style="left:131px;top:743px" width="18" height="18"><path d="M2 4l11-2 3 12-11 2z" fill="#fff" stroke="#3060A0"/><path d="M5 6l6-1 2 7-6 1z" fill="#60A0E0"/><path d="M13 4l4 3-4 1z" fill="#E04040"/></svg>
<svg class="a" style="left:153px;top:743px" width="18" height="18"><circle cx="9" cy="9" r="6" fill="none" stroke="#50A8F8" stroke-width="3"/><path d="M4 9h10" stroke="#50A8F8" stroke-width="2"/><path d="M1 14q6-14 16-12" stroke="#E8C060" stroke-width="1.5" fill="none"/></svg>
<span class="a" style="left:181px;top:738px;color:#C8DCFF;font-size:13px;line-height:14px;font-weight:bold">»</span>
<div class="a" style="left:199px;top:742px;width:158px;height:23px;border-radius:3px;background:linear-gradient(#3E80F0,#3A7CEE 60%,#3676EA);box-shadow:inset 1px 1px 0 #64A0F8,inset -1px -1px 0 #2F68D8"><svg class="a" style="left:11px;top:3px" width="13" height="17"><path d="M6.5 0.5l6 2v8q0 3-6 6-6-3-6-6v-8z" fill="#fff"/><path d="M6.5 2l4.5 1.5v6.5q0 2-4.5 4.5-4.5-2.5-4.5-4.5V3.5z" fill="#80C020"/><path d="M6.5 4v7M3 7.5h7" stroke="#fff" stroke-width="2.5"/></svg><span class="a" style="left:29px;top:4px;color:#fff;font-size:12px;line-height:15px;white-space:pre">360<span style="font-family:'Liberation Sans T';font-size:12px;line-height:0;font-style:normal;vertical-align:-2px;">安全卫士</span></span></div>
<div class="a" style="left:359px;top:742px;width:156px;height:23px;border-radius:3px;background:linear-gradient(#3E80F0,#3A7CEE 60%,#3676EA);box-shadow:inset 1px 1px 0 #64A0F8,inset -1px -1px 0 #2F68D8"><svg class="a" style="left:10px;top:3px" width="18" height="17"><path d="M6 1h8l2 2v13H6z" fill="#fff" stroke="#A0A0A0"/><circle cx="7" cy="9" r="4.5" fill="none" stroke="#2070D0" stroke-width="2.2"/><path d="M2.5 9h9" stroke="#2070D0" stroke-width="1.8"/><path d="M1 14q5-12 13-10" stroke="#F0C040" stroke-width="1.2" fill="none"/></svg><span class="a" style="left:29px;top:4px;color:#fff;font-size:12px;line-height:15px;white-space:pre"><span style="font-family:'Liberation Sans T';font-size:12px;line-height:0;font-style:normal;vertical-align:-2px;">工控人家园论坛</span> <span style="font-family:'Liberation Mono';font-size:11px">-...</span></span></div>
<div class="a" style="left:519px;top:742px;width:159px;height:23px;border-radius:3px;background:linear-gradient(#3E80F0,#3A7CEE 60%,#3676EA);box-shadow:inset 1px 1px 0 #64A0F8,inset -1px -1px 0 #2F68D8"><svg class="a" style="left:10px;top:3px" width="18" height="17"><path d="M6 1h8l2 2v13H6z" fill="#fff" stroke="#A0A0A0"/><circle cx="7" cy="9" r="4.5" fill="none" stroke="#2070D0" stroke-width="2.2"/><path d="M2.5 9h9" stroke="#2070D0" stroke-width="1.8"/><path d="M1 14q5-12 13-10" stroke="#F0C040" stroke-width="1.2" fill="none"/></svg><span class="a" style="left:29px;top:4px;color:#fff;font-size:12px;line-height:15px;white-space:pre"><span style="font-family:'Liberation Sans T';font-size:12px;line-height:0;font-style:normal;vertical-align:-2px;">工控人家园论坛</span> <span style="font-family:'Liberation Mono';font-size:11px">-...</span></span></div>
<div class="a" style="left:682px;top:742px;width:157px;height:23px;border-radius:3px;background:linear-gradient(#3E80F0,#3A7CEE 60%,#3676EA);box-shadow:inset 1px 1px 0 #64A0F8,inset -1px -1px 0 #2F68D8"><svg class="a" style="left:8px;top:3px" width="17" height="17"><path d="M5 0h7l5 5v7l-5 5H5l-5-5V5z" fill="#000"/><path d="M2 5h6v8H2z" fill="#E00000"/><path d="M9 5h5v4H9z" fill="#fff"/><path d="M9 9h5v4l-3 2H9z" fill="#A08040"/></svg><span class="a" style="left:29px;top:4px;color:#fff;font-size:12px;line-height:15px;white-space:pre"><span style="font-family:'Liberation Mono';font-size:10px;font-weight:bold">MELSOFT</span><span style="font-family:'Liberation Sans T';font-size:12px;line-height:0;font-style:normal;vertical-align:-2px;">系列</span><span style="font-family:'Liberation Mono';font-size:10px;font-weight:bold"> GX D...</span></span></div>
<div class="a" style="left:876px;top:737px;width:148px;height:31px;background:linear-gradient(#1590EE 0,#18A2F5 2px,#0D8DEB 6px,#0A85E8 24px,#0874D8 31px);border-left:1px solid #095BC9;box-shadow:inset 1px 0 1px #1BB0F8"></div>
<svg class="a" style="left:849px;top:747px" width="14" height="12"><rect x="0.5" y="3.5" width="13" height="8" fill="#fff" stroke="#202020"/><path d="M2 5.5h10M2 7.5h10M2 9.5h10" stroke="#404040" stroke-dasharray="1 1"/><path d="M3 0h8" stroke="#404040"/></svg>
<div class="a" style="left:867px;top:745px;width:18px;height:18px;border-radius:9px;background:radial-gradient(circle at 40% 35%,#90C8FF,#3C8CF0 70%,#2A70D8);border:1px solid #C8E0FF"><svg class="a" style="left:4px;top:3px" width="8" height="10"><path d="M6 1L2 5l4 4" fill="none" stroke="#fff" stroke-width="2.2"/></svg></div>
<svg class="a" style="left:887px;top:746px" width="14" height="16"><path d="M7 0.5l6 2v5q0 5-6 8-6-3-6-8v-5z" fill="#F0D820" stroke="#806000"/><path d="M7 4v5M7 11v1" stroke="#000" stroke-width="1.6"/></svg>
<svg class="a" style="left:904px;top:746px" width="16" height="16"><rect x="5" y="1" width="9" height="7" fill="#303870" stroke="#8090C0"/><rect x="1" y="6" width="9" height="7" fill="#303870" stroke="#8090C0"/><path d="M2 14h9" stroke="#C0C0C0" stroke-width="2"/></svg>
<svg class="a" style="left:922px;top:746px" width="16" height="16"><rect x="5" y="1" width="9" height="7" fill="#303870" stroke="#8090C0"/><rect x="1" y="6" width="9" height="7" fill="#303870" stroke="#8090C0"/><path d="M11 6l5 9H6z" fill="#F8E020" stroke="#806000"/><path d="M11 9v3" stroke="#000"/></svg>
<svg class="a" style="left:940px;top:746px" width="16" height="16"><rect x="0" y="0" width="16" height="16" fill="#fff"/><path d="M1 1h4v5l5-5h5l-7 7 7 7h-5l-5-5v5H1z" fill="#E00000"/><path d="M9 9l6 6M15 11v4h-4" stroke="#000" stroke-width="2" fill="none"/></svg>
<svg class="a" style="left:958px;top:747px" width="16" height="14"><rect x="0.5" y="0.5" width="15" height="13" rx="2" fill="#80D040" stroke="#408020"/><rect x="2" y="4" width="12" height="6" fill="#50A020"/><circle cx="8" cy="7" r="2" fill="#D0F0A0"/></svg>
<span class="a" style="left:981px;top:745px;color:#fff;font-size:12.5px;line-height:16px">16:52</span>
</body></html>
